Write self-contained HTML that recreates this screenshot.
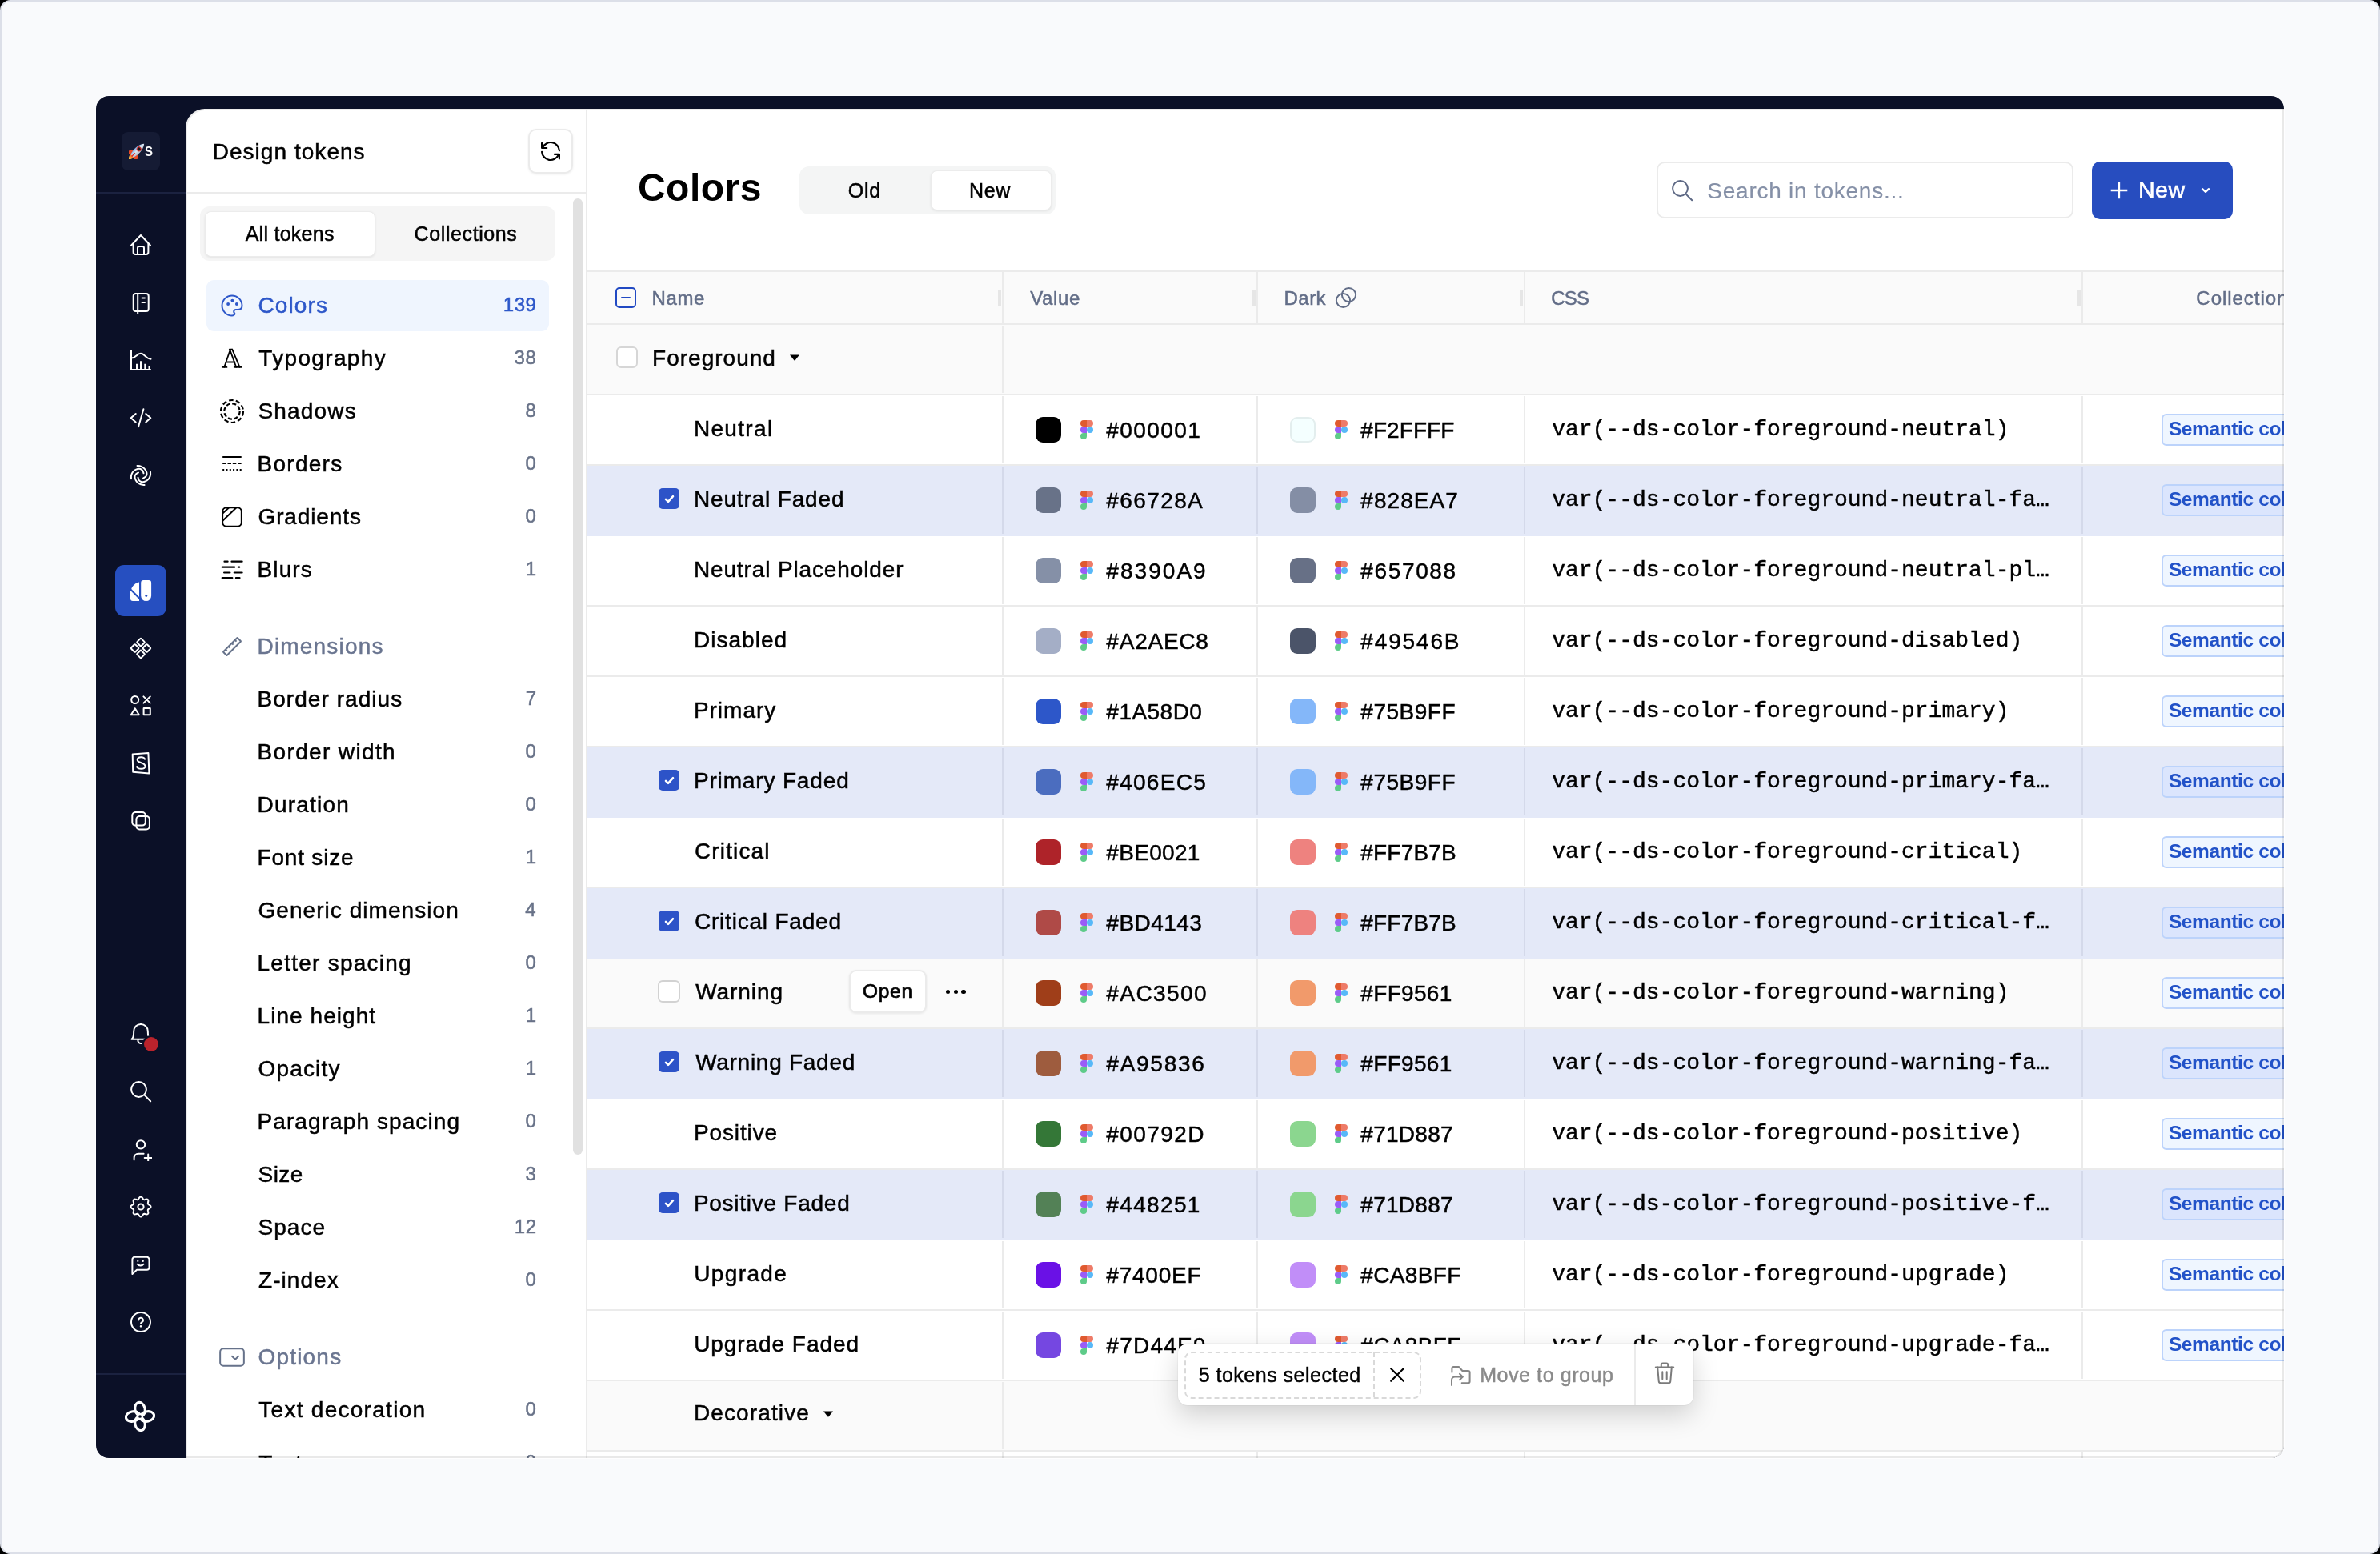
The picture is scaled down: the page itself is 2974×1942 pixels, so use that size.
<!DOCTYPE html>
<html><head><meta charset="utf-8"><title>Design tokens</title>
<style>
*{box-sizing:border-box;margin:0;padding:0}
html,body{width:2974px;height:1942px;overflow:hidden;background:#000}
body{font-family:"Liberation Sans",sans-serif;position:relative}
.b{position:absolute;display:block}
.t{position:absolute;white-space:nowrap}
#frame{position:absolute;left:0;top:0;width:2974px;height:1942px;background:#f9fafc;border:2px solid #dcdfe8;border-radius:13px;overflow:hidden}
#win{position:absolute;left:120px;top:120px;width:2734px;height:1702px;background:#0b1027;border-radius:16px;overflow:hidden;box-shadow:0 0 0 1px rgba(255,255,255,.8)}
#panel{position:absolute;left:112px;top:16px;width:2622px;height:1686px;background:#fff;border:solid #ececec;border-width:2px 0 0 2px;border-radius:24px 0 16px 0}
</style></head><body>
<div id="frame"></div>
<div id="win"><div id="panel"></div></div>

<div class="b" style="left:120px;top:120px;width:2734px;height:1702px;overflow:hidden;border-radius:16px;will-change:transform"><div class="b" style="left:-120px;top:-120px;width:2974px;height:1942px">
<div class="b" style="left:152px;top:165px;width:48px;height:48px;background:#151b34;border-radius:8px;"></div>
<svg class="b" style="left:160.5px;top:179px" width="20" height="20" viewBox="0 0 20 20"><defs><linearGradient id="rk" x1="0" x2="1" y1="0" y2="0"><stop offset="0" stop-color="#7fb0e6"/><stop offset=".45" stop-color="#dfe8f2"/><stop offset="1" stop-color="#aebccc"/></linearGradient><linearGradient id="fl" x1="0" x2="0" y1="0" y2="1"><stop offset="0" stop-color="#f4622a"/><stop offset="1" stop-color="#fbe44d"/></linearGradient></defs><g transform="translate(10.3,9.7) rotate(45)"><path d="M-2.400,8C-3.600,10.500 -1.500,13 0,15.500C1.500,13 3.600,10.500 2.400,8Z" fill="url(#fl)"/><path d="M-3.300,0.500L-7.400,6.500L-6.600,12L-3,7.500Z" fill="#ea4a26"/><path d="M3.300,0.500L7.400,6.500L6.600,12L3,7.500Z" fill="#ea4a26"/><path d="M0,-12.500C-3.300,-8.500 -4.300,-3 -3.900,3L-2.800,8.500H2.800L3.900,3C4.300,-3 3.300,-8.500 0,-12.500Z" fill="url(#rk)"/><circle cx="0" cy="-3.400" r="2.500" fill="#15171c" stroke="#d8322e" stroke-width="1"/><path d="M0,3.500v6" stroke="#d8322e" stroke-width="1.300"/></g></svg>
<div class="t " style="left:181.00px;top:177.9px;height:23px;line-height:23px;font-size:17px;color:#fff;font-weight:700;transform:scaleX(.88);transform-origin:0 50%;">S</div>
<div class="b" style="left:120px;top:240px;width:112px;height:2px;background:#1b2240;"></div>
<svg class="b" style="left:162.00px;top:291.70px;color:#fff;" width="28" height="28" viewBox="-14.0 -14.0 28 28" fill="none" stroke="#fff" stroke-width="2" stroke-linecap="round" stroke-linejoin="round"><path d="M-12,0.7L0,-12L12,0.7"/><path d="M-9.4,-1.3V9.2a2.8,2.8 0 0 0 2.8,2.8H6.600a2.800,2.800 0 0 0 2.800,-2.800V-1.300"/><path d="M-4,12V4a2,2 0 0 1 2,-2h4a2,2 0 0 1 2,2V12"/></svg>
<svg class="b" style="left:162.00px;top:364.70px;color:#fff;" width="28" height="28" viewBox="-14.0 -14.0 28 28" fill="none" stroke="#fff" stroke-width="2" stroke-linecap="round" stroke-linejoin="round"><rect x="-9.300" y="-12" width="19" height="22" rx="3"/><path d="M-3.800,-12V13"/><path d="M1.500,-6.400h3.500M1.500,-1h3.500"/></svg>
<svg class="b" style="left:162.00px;top:435.90px;color:#fff;" width="28" height="28" viewBox="-14.0 -14.0 28 28" fill="none" stroke="#fff" stroke-width="2" stroke-linecap="round" stroke-linejoin="round"><path d="M-12,-12V12H12" stroke-linejoin="miter"/><path d="M-12,-2.500C-6,-2.500 -5,-8.200 0,-8.200S6,-1.300 12.500,-1.300"/><path d="M-5,12V4.800M0,12V1.200M5.300,12V4.800M10.500,12V7.600" stroke-linecap="butt"/></svg>
<svg class="b" style="left:162.00px;top:507.80px;color:#fff;" width="28" height="28" viewBox="-14.0 -14.0 28 28" fill="none" stroke="#fff" stroke-width="2" stroke-linecap="round" stroke-linejoin="round"><path d="M-6.300,-5L-12.300,0.300L-6.300,5.600M6.300,-5L12.300,0.300L6.300,5.600M3.400,-10.800L-3,11.200"/></svg>
<svg class="b" style="left:162.00px;top:579.90px;color:#fff;" width="28" height="28" viewBox="-14.0 -14.0 28 28" fill="none" stroke="#fff" stroke-width="2" stroke-linecap="round" stroke-linejoin="round"><path d="M-4.50,-12.00C-3.75,-11.88 -1.35,-11.75 0.00,-11.30C1.35,-10.85 2.55,-10.18 3.60,-9.30C4.65,-8.42 5.65,-7.17 6.30,-6.00C6.95,-4.83 7.45,-3.47 7.50,-2.30C7.55,-1.13 7.35,0.03 6.60,1.00C5.85,1.97 3.60,3.08 3.00,3.50"/><path d="M4.50,12.00C3.75,11.88 1.35,11.75 0.00,11.30C-1.35,10.85 -2.55,10.18 -3.60,9.30C-4.65,8.42 -5.65,7.17 -6.30,6.00C-6.95,4.83 -7.45,3.47 -7.50,2.30C-7.55,1.13 -7.35,-0.03 -6.60,-1.00C-5.85,-1.97 -3.60,-3.08 -3.00,-3.50"/><path d="M-12.00,4.20C-12.00,3.58 -12.25,1.78 -12.00,0.50C-11.75,-0.78 -11.25,-2.33 -10.50,-3.50C-9.75,-4.67 -8.58,-5.75 -7.50,-6.50C-6.42,-7.25 -5.17,-7.75 -4.00,-8.00C-2.83,-8.25 -1.55,-8.33 -0.50,-8.00C0.55,-7.67 1.63,-6.88 2.30,-6.00C2.97,-5.12 3.30,-3.25 3.50,-2.70"/><path d="M12.00,-4.20C12.00,-3.58 12.25,-1.78 12.00,-0.50C11.75,0.78 11.25,2.33 10.50,3.50C9.75,4.67 8.58,5.75 7.50,6.50C6.42,7.25 5.17,7.75 4.00,8.00C2.83,8.25 1.55,8.33 0.50,8.00C-0.55,7.67 -1.63,6.88 -2.30,6.00C-2.97,5.12 -3.30,3.25 -3.50,2.70"/></svg>
<div class="b" style="left:144px;top:706px;width:64px;height:64px;background:#264fc0;border-radius:11px;"></div>
<svg class="b" style="left:162.00px;top:724.00px;color:#fff;" width="28" height="28" viewBox="-14.0 -14.0 28 28" fill="none" stroke="#fff" stroke-width="2" stroke-linecap="round" stroke-linejoin="round"><path d="M0.200,-9.800a3.200,3.200 0 0 1 3.200,-3.200h6.500a3.200,3.200 0 0 1 3.200,3.200V6.600a6.450,6.450 0 0 1 -12.900,0Z" fill="#fff" stroke="none"/><circle cx="6.800" cy="6.600" r="1.450" fill="#264fc0" stroke="none"/><path d="M-2,-10.600C-6,-10 -9.500,-7 -11.200,-3.600L-13,0.800V10a3,3 0 0 0 3,3H-2Z" fill="#fff" stroke="none"/><path d="M-13.500,-2.300L-0.500,11" stroke="#264fc0" stroke-width="2.100" stroke-linecap="butt"/></svg>
<svg class="b" style="left:162.00px;top:796.00px;color:#fff;" width="28" height="28" viewBox="-14.0 -14.0 28 28" fill="none" stroke="#fff" stroke-width="2" stroke-linecap="round" stroke-linejoin="round"><rect x="-3.65" y="-11.05" width="7.3" height="7.3" rx="1" transform="rotate(45 0 -7.4)"/><rect x="-3.65" y="3.7500000000000004" width="7.3" height="7.3" rx="1" transform="rotate(45 0 7.4)"/><rect x="-11.05" y="-3.65" width="7.3" height="7.3" rx="1" transform="rotate(45 -7.4 0)"/><rect x="3.7500000000000004" y="-3.65" width="7.3" height="7.3" rx="1" transform="rotate(45 7.4 0)"/></svg>
<svg class="b" style="left:162.00px;top:868.00px;color:#fff;" width="28" height="28" viewBox="-14.0 -14.0 28 28" fill="none" stroke="#fff" stroke-width="2" stroke-linecap="round" stroke-linejoin="round"><circle cx="-7.300" cy="-7.500" r="4.500"/><path d="M3.400,-11.600L11.800,-3.400M11.800,-11.600L3.400,-3.400"/><path d="M-7.200,3.200L-12.200,11.300H-2.200Z"/><rect x="3.600" y="3.100" width="8.200" height="8.200" rx=".3"/></svg>
<svg class="b" style="left:162.00px;top:939.70px;color:#fff;" width="28" height="28" viewBox="-14.0 -14.0 28 28" fill="none" stroke="#fff" stroke-width="2" stroke-linecap="round" stroke-linejoin="round"><path d="M-10.300,-11.500L9.400,-13L10.400,12.400L-9.800,10.700Z"/><path d="M5,-5.300C5,-8.500 -4.300,-9 -4.300,-4.500C-4.300,0 5.500,-1.500 5.500,3.500C5.500,8 -4.800,7.700 -4.800,4"/></svg>
<svg class="b" style="left:162.00px;top:1011.80px;color:#fff;" width="28" height="28" viewBox="-14.0 -14.0 28 28" fill="none" stroke="#fff" stroke-width="2" stroke-linecap="round" stroke-linejoin="round"><rect x="-10.700" y="-10.900" width="16.500" height="16.500" rx="4"/><rect x="-5.600" y="-6" width="16.500" height="16.500" rx="4"/></svg>
<svg class="b" style="left:162.00px;top:1278.00px;color:#fff;" width="28" height="28" viewBox="-14.0 -14.0 28 28" fill="none" stroke="#fff" stroke-width="2" stroke-linecap="round" stroke-linejoin="round"><path d="M-11.500,6.700C-9,5.500 -8.800,2 -8.800,-3.200a8.800,8.800 0 0 1 17.600,0c0,5.200 .2,8.700 2.700,9.900H-11.500"/><path d="M0,-13v1"/><path d="M-3.300,7a3.600,3.600 0 0 0 3.600,5"/></svg>
<svg class="b" style="left:162.00px;top:1350.00px;color:#fff;" width="28" height="28" viewBox="-14.0 -14.0 28 28" fill="none" stroke="#fff" stroke-width="2" stroke-linecap="round" stroke-linejoin="round"><circle cx="-2.500" cy="-2.500" r="9.400"/><path d="M4.400,4.400L12.200,12.200"/></svg>
<svg class="b" style="left:162.00px;top:1422.60px;color:#fff;" width="28" height="28" viewBox="-14.0 -14.0 28 28" fill="none" stroke="#fff" stroke-width="2" stroke-linecap="round" stroke-linejoin="round"><circle cx="0" cy="-6.600" r="5.200"/><path d="M-8.400,12.500V10a5.300,5.300 0 0 1 5.300,-5.300H3.600"/><path d="M9.200,5.500v9M4.700,10h9"/></svg>
<svg class="b" style="left:162.00px;top:1494.10px;color:#fff;" width="28" height="28" viewBox="-14.0 -14.0 28 28" fill="none" stroke="#fff" stroke-width="2" stroke-linecap="round" stroke-linejoin="round"><path d="M0.00,-12.55L0.81,-12.33L1.54,-11.72L2.17,-10.89L2.69,-10.02L3.16,-9.32L3.69,-8.92L4.35,-8.83L5.19,-8.99L6.17,-9.23L7.20,-9.38L8.15,-9.29L8.87,-8.87L9.29,-8.15L9.38,-7.20L9.23,-6.17L8.99,-5.19L8.83,-4.35L8.92,-3.69L9.32,-3.16L10.02,-2.69L10.89,-2.17L11.72,-1.54L12.33,-0.81L12.55,-0.00L12.33,0.81L11.72,1.54L10.89,2.17L10.02,2.69L9.32,3.16L8.92,3.69L8.83,4.35L8.99,5.19L9.23,6.17L9.38,7.20L9.29,8.15L8.87,8.87L8.15,9.29L7.20,9.38L6.17,9.23L5.19,8.99L4.35,8.83L3.69,8.92L3.16,9.32L2.69,10.02L2.17,10.89L1.54,11.72L0.81,12.33L0.00,12.55L-0.81,12.33L-1.54,11.72L-2.17,10.89L-2.69,10.02L-3.16,9.32L-3.69,8.92L-4.35,8.83L-5.19,8.99L-6.17,9.23L-7.20,9.38L-8.15,9.29L-8.87,8.87L-9.29,8.15L-9.38,7.20L-9.23,6.17L-8.99,5.19L-8.83,4.35L-8.92,3.69L-9.32,3.16L-10.02,2.69L-10.89,2.17L-11.72,1.54L-12.33,0.81L-12.55,0.00L-12.33,-0.81L-11.72,-1.54L-10.89,-2.17L-10.02,-2.69L-9.32,-3.16L-8.92,-3.69L-8.83,-4.35L-8.99,-5.19L-9.23,-6.17L-9.38,-7.20L-9.29,-8.15L-8.87,-8.87L-8.15,-9.29L-7.20,-9.38L-6.17,-9.23L-5.19,-8.99L-4.35,-8.83L-3.69,-8.92L-3.16,-9.32L-2.69,-10.02L-2.17,-10.89L-1.54,-11.72L-0.81,-12.33L-0.00,-12.55Z"/><circle cx="0" cy="0" r="3.600"/></svg>
<svg class="b" style="left:162.00px;top:1567.00px;color:#fff;" width="28" height="28" viewBox="-14.0 -14.0 28 28" fill="none" stroke="#fff" stroke-width="2" stroke-linecap="round" stroke-linejoin="round"><path d="M-10.600,11V-7.200a3,3 0 0 1 3,-3H7.500a3,3 0 0 1 3,3V2.700a3,3 0 0 1 -3,3H-5Z"/><path d="M-3.700,-5.600v.6M2.800,-5.600v.6"/><path d="M-4.300,-1.300a5,5 0 0 0 7.800,0"/></svg>
<svg class="b" style="left:162.00px;top:1638.00px;color:#fff;" width="28" height="28" viewBox="-14.0 -14.0 28 28" fill="none" stroke="#fff" stroke-width="2" stroke-linecap="round" stroke-linejoin="round"><circle cx="0" cy="0" r="12"/><path d="M-2.700,-2.400a2.800,2.800 0 1 1 4,2.500c-.9,.5 -1.300,1 -1.300,2"/><path d="M0,5.300v.1" stroke-width="2.4"/></svg>
<div class="b" style="left:178px;top:1293.7px;width:22px;height:22px;background:#0b1026;border-radius:11px;"></div>
<div class="b" style="left:180px;top:1295.7px;width:18px;height:18px;background:#b9232c;border-radius:9px;"></div>
<div class="b" style="left:120px;top:1716px;width:112px;height:2px;background:#1b2240;"></div>
<svg class="b" style="left:155.10px;top:1750.00px;color:#fff;" width="40" height="40" viewBox="-20.0 -20.0 40 40" fill="none" stroke="#fff" stroke-width="3.1" stroke-linecap="round" stroke-linejoin="round"><ellipse cx="0" cy="-9" rx="6.200" ry="8.700" transform="rotate(0) rotate(-12 0 -9)"/><ellipse cx="0" cy="-9" rx="6.200" ry="8.700" transform="rotate(90) rotate(-12 0 -9)"/><ellipse cx="0" cy="-9" rx="6.200" ry="8.700" transform="rotate(180) rotate(-12 0 -9)"/><ellipse cx="0" cy="-9" rx="6.200" ry="8.700" transform="rotate(270) rotate(-12 0 -9)"/><circle cx="0" cy="0" r="3" fill="#0b1027" stroke-width="2.300"/></svg>
<div class="t " style="left:265.70px;top:169.5px;height:39px;line-height:39px;font-size:28px;color:#000;letter-spacing:1.04px;-webkit-text-stroke:0.5px #000;">Design tokens</div>
<div class="b" style="left:660px;top:161px;width:56px;height:56px;background:#fff;border-radius:10px;border:2px solid #ebebeb;box-shadow:0 1px 3px rgba(0,0,0,.07);"></div>
<svg class="b" style="left:674.00px;top:175.00px;color:#000;" width="28" height="28" viewBox="-14.0 -14.0 28 28" fill="none" stroke="#000" stroke-width="2.2" stroke-linecap="round" stroke-linejoin="round"><path d="M-10.900,-10.100V-4H-4.800"/><path d="M-9.800,-4.800A10.900,10.900 0 0 1 10.900,-0.700"/><path d="M10.900,9.500V3.800H4.900"/><path d="M9.800,4.800A10.900,10.900 0 0 1 -10.900,0.900"/></svg>
<div class="b" style="left:232px;top:240px;width:500px;height:2px;background:#ebebeb;"></div>
<div class="b" style="left:732px;top:136px;width:2px;height:1700px;background:#ebebeb;"></div>
<div class="b" style="left:716px;top:248px;width:12px;height:1195px;background:#e1e1e1;border-radius:6px;"></div>
<div class="b" style="left:250px;top:258px;width:444px;height:68px;background:#f5f5f5;border-radius:12px;"></div>
<div class="b" style="left:255.5px;top:263.5px;width:213px;height:57px;background:#fff;border-radius:8px;border:1px solid #ececec;box-shadow:0 1px 3px rgba(0,0,0,.08);"></div>
<div class="t " style="left:306.65px;top:274.5px;height:35px;line-height:35px;font-size:25px;color:#000;letter-spacing:0.27px;-webkit-text-stroke:0.5px #000;">All tokens</div>
<div class="t " style="left:517.60px;top:274.5px;height:35px;line-height:35px;font-size:25px;color:#000;letter-spacing:0.6px;-webkit-text-stroke:0.5px #000;">Collections</div>
<div class="b" style="left:258px;top:350px;width:428px;height:64px;background:#eff5fe;border-radius:9px;"></div>
<svg class="b" style="left:276.00px;top:368.00px;color:#2d57c9;" width="28" height="28" viewBox="-14.0 -14.0 28 28" fill="none" stroke="#2d57c9" stroke-width="2" stroke-linecap="round" stroke-linejoin="round"><path d="M0,12.500A12.500,12.500 0 1 1 12.500,0c0,3.600 -2.600,5 -5.200,5h-2.600a2.500,2.500 0 0 0 -1.800,4.200c1,1.200 .2,3.300 -2.900,3.300z"/><circle cx="-4.900" cy="-2" r="1.950" fill="currentColor" stroke="none"/><circle cx=".4" cy="-6.400" r="1.950" fill="currentColor" stroke="none"/><circle cx="5.900" cy="-2" r="1.950" fill="currentColor" stroke="none"/></svg>
<div class="t " style="left:322.50px;top:361.6px;height:39px;line-height:39px;font-size:28px;color:#2d57c9;letter-spacing:1.11px;-webkit-text-stroke:0.5px #2d57c9;">Colors</div>
<div class="t " style="right:2303.46px;top:363.8px;height:33px;line-height:33px;font-size:24px;color:#2d57c9;letter-spacing:0.6px;-webkit-text-stroke:0.5px #2d57c9;">139</div>
<svg class="b" style="left:276.00px;top:434.00px;color:#000;" width="28" height="28" viewBox="-14.0 -14.0 28 28" fill="none" stroke="#000" stroke-width="2" stroke-linecap="round" stroke-linejoin="round"><path d="M-2.200,-11L-9.700,10.700" stroke-width="1.800"/><path d="M0.200,-11.300L9.500,10.700M-2.600,-10.600L5.200,10.700" stroke-width="1.800"/><path d="M-3.300,-11.400h3.600" stroke-width="1.600"/><path d="M-7.300,4.500H3.400" stroke-width="1.800"/><path d="M-12.200,10.900h5.600M2.800,10.900h9.200" stroke-width="1.900"/></svg>
<div class="t " style="left:323.25px;top:427.6px;height:39px;line-height:39px;font-size:28px;color:#000;letter-spacing:1.34px;-webkit-text-stroke:0.5px #000;">Typography</div>
<div class="t " style="right:2303.55px;top:429.8px;height:33px;line-height:33px;font-size:24px;color:#687288;letter-spacing:0.6px;-webkit-text-stroke:0.5px #687288;">38</div>
<svg class="b" style="left:274.00px;top:497.80px;color:#000;" width="32" height="32" viewBox="-16.0 -16.0 32 32" fill="none" stroke="#000" stroke-width="2" stroke-linecap="round" stroke-linejoin="round"><circle cx="0" cy="0" r="14" stroke-dasharray="5.600 3.200" stroke-linecap="butt" stroke-width="2.200"/><circle cx="0" cy="0" r="9.700" stroke-dasharray="5.200 2.400" stroke-linecap="butt" stroke-width="2.200"/></svg>
<div class="t " style="left:322.50px;top:493.6px;height:39px;line-height:39px;font-size:28px;color:#000;letter-spacing:1.17px;-webkit-text-stroke:0.5px #000;">Shadows</div>
<div class="t " style="right:2303.65px;top:495.79999999999995px;height:33px;line-height:33px;font-size:24px;color:#687288;letter-spacing:0.6px;-webkit-text-stroke:0.5px #687288;">8</div>
<svg class="b" style="left:276.00px;top:565.30px;color:#000;" width="28" height="28" viewBox="-14.0 -14.0 28 28" fill="none" stroke="#000" stroke-width="2" stroke-linecap="round" stroke-linejoin="round"><path d="M-11.800,-8H11.700" stroke-linecap="butt"/><path d="M-11.800,0.100H11.700" stroke-dasharray="4.500 1.800" stroke-linecap="butt"/><path d="M-11.800,8H11.700" stroke-dasharray="2 2.300" stroke-linecap="butt"/></svg>
<div class="t " style="left:321.50px;top:559.6px;height:39px;line-height:39px;font-size:28px;color:#000;letter-spacing:1.27px;-webkit-text-stroke:0.5px #000;">Borders</div>
<div class="t " style="right:2303.65px;top:561.8px;height:33px;line-height:33px;font-size:24px;color:#687288;letter-spacing:0.6px;-webkit-text-stroke:0.5px #687288;">0</div>
<svg class="b" style="left:276.00px;top:631.90px;color:#000;" width="28" height="28" viewBox="-14.0 -14.0 28 28" fill="none" stroke="#000" stroke-width="2" stroke-linecap="round" stroke-linejoin="round"><rect x="-11.850" y="-11.850" width="23.700" height="23.700" rx="5"/><path d="M-11.500,4.500L5.400,-11.700M-11.500,-4.700L-3.800,-11.700"/></svg>
<div class="t " style="left:322.50px;top:625.6px;height:39px;line-height:39px;font-size:28px;color:#000;letter-spacing:0.88px;-webkit-text-stroke:0.5px #000;">Gradients</div>
<div class="t " style="right:2303.65px;top:627.8px;height:33px;line-height:33px;font-size:24px;color:#687288;letter-spacing:0.6px;-webkit-text-stroke:0.5px #687288;">0</div>
<svg class="b" style="left:276.00px;top:698.40px;color:#000;" width="28" height="28" viewBox="-14.0 -14.0 28 28" fill="none" stroke="#000" stroke-width="2" stroke-linecap="round" stroke-linejoin="round"><path d="M-9.500,-10.300H-5.400M-0.500,-10.300H12.600M-12.300,-3.300H3.100M7.800,-3.300H9.200M-9.900,3.500H-2.600M2.800,3.500H12.600M-12.300,10.200H0.300M4.900,10.200H9.500" stroke-width="2.200"/></svg>
<div class="t " style="left:321.50px;top:691.6px;height:39px;line-height:39px;font-size:28px;color:#000;letter-spacing:1.12px;-webkit-text-stroke:0.5px #000;">Blurs</div>
<div class="t " style="right:2303.40px;top:693.8px;height:33px;line-height:33px;font-size:24px;color:#687288;letter-spacing:0.6px;-webkit-text-stroke:0.5px #687288;">1</div>
<svg class="b" style="left:274.00px;top:791.90px;color:#66728a;" width="32" height="32" viewBox="-16.0 -16.0 32 32" fill="none" stroke="#66728a" stroke-width="2" stroke-linecap="round" stroke-linejoin="round"><g transform="rotate(-45)"><rect x="-12.500" y="-3.200" width="25" height="6.400" rx=".5"/><path d="M-8.400,-3.200v2.600M-2.800,-3.200v2.600M2.800,-3.200v2.600M8.400,-3.200v2.600" stroke-linecap="butt"/></g></svg>
<div class="t " style="left:321.50px;top:788.1px;height:39px;line-height:39px;font-size:28px;color:#6a7590;letter-spacing:1.18px;-webkit-text-stroke:0.5px #6a7590;">Dimensions</div>
<div class="t " style="left:321.50px;top:854.1px;height:39px;line-height:39px;font-size:28px;color:#000;letter-spacing:1.05px;-webkit-text-stroke:0.5px #000;">Border radius</div>
<div class="t " style="right:2303.40px;top:856.3px;height:33px;line-height:33px;font-size:24px;color:#687288;letter-spacing:0.6px;-webkit-text-stroke:0.5px #687288;">7</div>
<div class="t " style="left:321.50px;top:920.1px;height:39px;line-height:39px;font-size:28px;color:#000;letter-spacing:1.36px;-webkit-text-stroke:0.5px #000;">Border width</div>
<div class="t " style="right:2303.65px;top:922.3px;height:33px;line-height:33px;font-size:24px;color:#687288;letter-spacing:0.6px;-webkit-text-stroke:0.5px #687288;">0</div>
<div class="t " style="left:321.50px;top:986.1px;height:39px;line-height:39px;font-size:28px;color:#000;letter-spacing:1.21px;-webkit-text-stroke:0.5px #000;">Duration</div>
<div class="t " style="right:2303.65px;top:988.3px;height:33px;line-height:33px;font-size:24px;color:#687288;letter-spacing:0.6px;-webkit-text-stroke:0.5px #687288;">0</div>
<div class="t " style="left:321.50px;top:1052.1px;height:39px;line-height:39px;font-size:28px;color:#000;letter-spacing:0.81px;-webkit-text-stroke:0.5px #000;">Font size</div>
<div class="t " style="right:2303.40px;top:1054.3px;height:33px;line-height:33px;font-size:24px;color:#687288;letter-spacing:0.6px;-webkit-text-stroke:0.5px #687288;">1</div>
<div class="t " style="left:322.50px;top:1118.1px;height:39px;line-height:39px;font-size:28px;color:#000;letter-spacing:1.05px;-webkit-text-stroke:0.5px #000;">Generic dimension</div>
<div class="t " style="right:2303.90px;top:1120.3px;height:33px;line-height:33px;font-size:24px;color:#687288;letter-spacing:0.6px;-webkit-text-stroke:0.5px #687288;">4</div>
<div class="t " style="left:321.50px;top:1184.1px;height:39px;line-height:39px;font-size:28px;color:#000;letter-spacing:1.25px;-webkit-text-stroke:0.5px #000;">Letter spacing</div>
<div class="t " style="right:2303.65px;top:1186.3px;height:33px;line-height:33px;font-size:24px;color:#687288;letter-spacing:0.6px;-webkit-text-stroke:0.5px #687288;">0</div>
<div class="t " style="left:321.50px;top:1250.1px;height:39px;line-height:39px;font-size:28px;color:#000;letter-spacing:1.06px;-webkit-text-stroke:0.5px #000;">Line height</div>
<div class="t " style="right:2303.40px;top:1252.3px;height:33px;line-height:33px;font-size:24px;color:#687288;letter-spacing:0.6px;-webkit-text-stroke:0.5px #687288;">1</div>
<div class="t " style="left:322.50px;top:1316.1px;height:39px;line-height:39px;font-size:28px;color:#000;letter-spacing:1.17px;-webkit-text-stroke:0.5px #000;">Opacity</div>
<div class="t " style="right:2303.40px;top:1318.3px;height:33px;line-height:33px;font-size:24px;color:#687288;letter-spacing:0.6px;-webkit-text-stroke:0.5px #687288;">1</div>
<div class="t " style="left:321.50px;top:1382.1px;height:39px;line-height:39px;font-size:28px;color:#000;letter-spacing:1.09px;-webkit-text-stroke:0.5px #000;">Paragraph spacing</div>
<div class="t " style="right:2303.65px;top:1384.3px;height:33px;line-height:33px;font-size:24px;color:#687288;letter-spacing:0.6px;-webkit-text-stroke:0.5px #687288;">0</div>
<div class="t " style="left:322.50px;top:1448.1px;height:39px;line-height:39px;font-size:28px;color:#000;letter-spacing:0.45px;-webkit-text-stroke:0.5px #000;">Size</div>
<div class="t " style="right:2303.65px;top:1450.3px;height:33px;line-height:33px;font-size:24px;color:#687288;letter-spacing:0.6px;-webkit-text-stroke:0.5px #687288;">3</div>
<div class="t " style="left:322.50px;top:1514.1px;height:39px;line-height:39px;font-size:28px;color:#000;letter-spacing:1.05px;-webkit-text-stroke:0.5px #000;">Space</div>
<div class="t " style="right:2303.30px;top:1516.3px;height:33px;line-height:33px;font-size:24px;color:#687288;letter-spacing:0.6px;-webkit-text-stroke:0.5px #687288;">12</div>
<div class="t " style="left:323.00px;top:1580.1px;height:39px;line-height:39px;font-size:28px;color:#000;letter-spacing:1.05px;-webkit-text-stroke:0.5px #000;">Z-index</div>
<div class="t " style="right:2303.65px;top:1582.3px;height:33px;line-height:33px;font-size:24px;color:#687288;letter-spacing:0.6px;-webkit-text-stroke:0.5px #687288;">0</div>
<svg class="b" style="left:273.00px;top:1678.90px;color:#66728a;" width="34" height="34" viewBox="-17.0 -17.0 34 34" fill="none" stroke="#66728a" stroke-width="2" stroke-linecap="round" stroke-linejoin="round"><rect x="-14.850" y="-10.700" width="29.700" height="21.400" rx="4"/><path d="M0,-1.300L4,2.700L8,-1.300"/></svg>
<div class="t " style="left:322.50px;top:1676.1px;height:39px;line-height:39px;font-size:28px;color:#6a7590;letter-spacing:1.19px;-webkit-text-stroke:0.5px #6a7590;">Options</div>
<div class="t " style="left:323.25px;top:1742.1px;height:39px;line-height:39px;font-size:28px;color:#000;letter-spacing:1.28px;-webkit-text-stroke:0.5px #000;">Text decoration</div>
<div class="t " style="right:2303.53px;top:1744.3px;height:33px;line-height:33px;font-size:24px;color:#687288;letter-spacing:0.72px;-webkit-text-stroke:0.5px #687288;">0</div>
<div class="t " style="left:323.25px;top:1809.0px;height:39px;line-height:39px;font-size:28px;color:#000;letter-spacing:0.84px;-webkit-text-stroke:0.5px #000;">Text case</div>
<div class="t " style="right:2303.53px;top:1810.3px;height:33px;line-height:33px;font-size:24px;color:#687288;letter-spacing:0.72px;-webkit-text-stroke:0.5px #687288;">0</div>
<div class="t " style="left:796.95px;top:199.5px;height:70px;line-height:70px;font-size:48px;color:#000;font-weight:700;letter-spacing:0.51px;">Colors</div>
<div class="b" style="left:999px;top:208px;width:320px;height:60px;background:#f4f5f5;border-radius:12px;"></div>
<div class="b" style="left:1162.5px;top:213px;width:151px;height:49.5px;background:#fff;border-radius:8px;border:1px solid #ececec;box-shadow:0 1px 3px rgba(0,0,0,.08);"></div>
<div class="t " style="left:1059.85px;top:221.1px;height:35px;line-height:35px;font-size:25px;color:#000;letter-spacing:0.75px;-webkit-text-stroke:0.5px #000;">Old</div>
<div class="t " style="left:1210.95px;top:221.1px;height:35px;line-height:35px;font-size:25px;color:#000;letter-spacing:0.72px;-webkit-text-stroke:0.5px #000;">New</div>
<div class="b" style="left:2070px;top:202.3px;width:521px;height:71.2px;background:#fff;border-radius:10px;border:2px solid #ebebeb;"></div>
<svg class="b" style="left:2088.00px;top:224.00px;color:#5d6884;" width="28" height="28" viewBox="-14.0 -14.0 28 28" fill="none" stroke="#5d6884" stroke-width="2" stroke-linecap="round" stroke-linejoin="round"><circle cx="-2.500" cy="-2.500" r="9.400"/><path d="M4.400,4.400L12.200,12.200"/></svg>
<div class="t " style="left:2133.36px;top:218.5px;height:39px;line-height:39px;font-size:28px;color:#8590a7;letter-spacing:0.75px;-webkit-text-stroke:0.15px #8590a7;">Search in tokens...</div>
<div class="b" style="left:2614px;top:202px;width:176px;height:72px;background:#274dbf;border-radius:10px;"></div>
<svg class="b" style="left:2634.00px;top:224.00px;color:#fff;" width="28" height="28" viewBox="-14.0 -14.0 28 28" fill="none" stroke="#fff" stroke-width="2.3" stroke-linecap="round" stroke-linejoin="round"><path d="M0,-10.300V10.300M-10.300,0H10.300" stroke-linecap="butt"/></svg>
<div class="t " style="left:2671.97px;top:218.1px;height:39px;line-height:39px;font-size:28.5px;color:#fff;letter-spacing:0.53px;-webkit-text-stroke:0.6px #fff;">New</div>
<svg class="b" style="left:2748.00px;top:230.20px;color:#fff;" width="16" height="16" viewBox="-8.0 -8.0 16 16" fill="none" stroke="#fff" stroke-width="2.4" stroke-linecap="round" stroke-linejoin="round"><path d="M-4,-1.800L0,1.800L4,-1.800"/></svg>
<div class="b" style="left:734px;top:338px;width:2120px;height:68px;background:#fafafa;border-top:2px solid #ebebeb;border-bottom:2px solid #ebebeb;"></div>
<div class="b" style="left:768.8px;top:358.8px;width:26.4px;height:26.4px;border-radius:5px;border:2px solid #2149c3;"></div>
<div class="b" style="left:776px;top:370.9px;width:12.1px;height:2.2px;background:#2149c3;border-radius:1px;"></div>
<div class="t " style="left:814.40px;top:355.7px;height:33px;line-height:33px;font-size:24px;color:#626d87;letter-spacing:0.67px;-webkit-text-stroke:0.5px #626d87;">Name</div>
<div class="t " style="left:1287.15px;top:355.7px;height:33px;line-height:33px;font-size:24px;color:#626d87;letter-spacing:0.64px;-webkit-text-stroke:0.5px #626d87;">Value</div>
<div class="t " style="left:1604.50px;top:355.7px;height:33px;line-height:33px;font-size:24px;color:#626d87;letter-spacing:0.48px;-webkit-text-stroke:0.5px #626d87;">Dark</div>
<svg class="b" style="left:1667.00px;top:357.00px;color:#626d87;" width="30" height="30" viewBox="-15.0 -15.0 30 30" fill="none" stroke="#626d87" stroke-width="2" stroke-linecap="round" stroke-linejoin="round"><circle cx="-3.500" cy="3.500" r="8.600"/><circle cx="3.500" cy="-3.500" r="8.600"/></svg>
<div class="t " style="left:1938.25px;top:355.7px;height:33px;line-height:33px;font-size:24px;color:#626d87;letter-spacing:-0.78px;-webkit-text-stroke:0.5px #626d87;">CSS</div>
<div class="t " style="left:2744.35px;top:355.7px;height:33px;line-height:33px;font-size:24px;color:#626d87;letter-spacing:0.96px;-webkit-text-stroke:0.5px #626d87;">Collection</div>
<div class="b" style="left:1252px;top:340px;width:2px;height:64px;background:#ebebeb;"></div>
<div class="b" style="left:1247px;top:362px;width:4px;height:20px;background:#e6e6e6;"></div>
<div class="b" style="left:1570px;top:340px;width:2px;height:64px;background:#ebebeb;"></div>
<div class="b" style="left:1565px;top:362px;width:4px;height:20px;background:#e6e6e6;"></div>
<div class="b" style="left:1904px;top:340px;width:2px;height:64px;background:#ebebeb;"></div>
<div class="b" style="left:1899px;top:362px;width:4px;height:20px;background:#e6e6e6;"></div>
<div class="b" style="left:2601px;top:340px;width:2px;height:64px;background:#ebebeb;"></div>
<div class="b" style="left:2596px;top:362px;width:4px;height:20px;background:#e6e6e6;"></div>
<div class="b" style="left:734px;top:406px;width:2120px;height:88px;background:#fafafa;border-bottom:2px solid #ebebeb;"></div>
<div class="b" style="left:1252px;top:407px;width:2px;height:84px;background:#ebebeb;"></div>
<div class="b" style="left:770px;top:433px;width:27px;height:27px;background:#fff;border-radius:6px;border:2px solid #d6d6d6;"></div>
<div class="t " style="left:815.10px;top:427.5px;height:39px;line-height:39px;font-size:28px;color:#000;letter-spacing:1.0px;-webkit-text-stroke:0.5px #000;">Foreground</div>
<svg class="b" style="left:986px;top:443px" width="14" height="8" viewBox="0 0 14 8"><path d="M1 .5h12L7.6 7.2a.8.8 0 0 1-1.2 0z" fill="#000"/></svg>
<div class="b" style="left:734px;top:494px;width:2120px;height:88px;background:#fff;border-bottom:2px solid #ebebeb;"></div>
<div class="b" style="left:1252px;top:495px;width:2px;height:84px;background:#ebebeb;"></div>
<div class="b" style="left:1570px;top:495px;width:2px;height:84px;background:#ebebeb;"></div>
<div class="b" style="left:1904px;top:495px;width:2px;height:84px;background:#ebebeb;"></div>
<div class="b" style="left:2601px;top:495px;width:2px;height:84px;background:#ebebeb;"></div>
<div class="t " style="left:866.90px;top:515.5px;height:39px;line-height:39px;font-size:28px;color:#000;letter-spacing:1.33px;-webkit-text-stroke:0.5px #000;">Neutral</div>
<div class="b" style="left:1294px;top:521px;width:32px;height:32px;background:#000000;border-radius:9px;"></div>
<svg class="b" style="left:1350px;top:525px" width="16" height="24" viewBox="0 0 16 24"><path d="M0 4a4 4 0 0 1 4-4h4v8H4a4 4 0 0 1-4-4z" fill="#e05a30"/><path d="M8 0h4a4 4 0 0 1 0 8H8z" fill="#ee7b68"/><path d="M0 12a4 4 0 0 1 4-4h4v8H4a4 4 0 0 1-4-4z" fill="#9a5cf7"/><circle cx="12" cy="12" r="4" fill="#57b8f8"/><path d="M0 20a4 4 0 0 1 4-4h4v4a4 4 0 0 1-8 0z" fill="#5ecb89"/></svg>
<div class="t " style="left:1382.35px;top:517.5px;height:39px;line-height:39px;font-size:28px;color:#000;letter-spacing:1.41px;-webkit-text-stroke:0.5px #000;">#000001</div>
<div class="b" style="left:1612px;top:521px;width:32px;height:32px;background:#f4ffff;border-radius:9px;border:2px solid #e3eeee;"></div>
<svg class="b" style="left:1668px;top:525px" width="16" height="24" viewBox="0 0 16 24"><path d="M0 4a4 4 0 0 1 4-4h4v8H4a4 4 0 0 1-4-4z" fill="#e05a30"/><path d="M8 0h4a4 4 0 0 1 0 8H8z" fill="#ee7b68"/><path d="M0 12a4 4 0 0 1 4-4h4v8H4a4 4 0 0 1-4-4z" fill="#9a5cf7"/><circle cx="12" cy="12" r="4" fill="#57b8f8"/><path d="M0 20a4 4 0 0 1 4-4h4v4a4 4 0 0 1-8 0z" fill="#5ecb89"/></svg>
<div class="t " style="left:1700.35px;top:517.5px;height:39px;line-height:39px;font-size:28px;color:#000;letter-spacing:0.05px;-webkit-text-stroke:0.5px #000;">#F2FFFF</div>
<div class="t " style="left:1939.16px;top:517.0px;height:39px;line-height:39px;font-size:28px;color:#000;font-family:'Liberation Mono',monospace;-webkit-text-stroke:0.45px #000;">var(--ds-color-foreground-neutral)</div>
<div class="b" style="left:2701px;top:517px;width:200px;height:40px;background:#eff6ff;border-radius:6px;border:2px solid #bcd3fb;"></div>
<div class="t " style="left:2709.90px;top:519.2px;height:34px;line-height:34px;font-size:24.5px;color:#2252c8;font-weight:700;letter-spacing:-0.38px;">Semantic colors</div>
<div class="b" style="left:734px;top:582px;width:2120px;height:88px;background:#e4e9f8;border-bottom:2px solid #e4e9f8;"></div>
<div class="b" style="left:1252px;top:583px;width:2px;height:84px;background:#d4d9ea;"></div>
<div class="b" style="left:1570px;top:583px;width:2px;height:84px;background:#d4d9ea;"></div>
<div class="b" style="left:1904px;top:583px;width:2px;height:84px;background:#d4d9ea;"></div>
<div class="b" style="left:2601px;top:583px;width:2px;height:84px;background:#d4d9ea;"></div>
<div class="b" style="left:822.7px;top:609.7px;width:26.6px;height:26.6px;background:#2d53c8;border-radius:5px;"></div>
<svg class="b" style="left:822.5px;top:609.5px" width="27" height="27" viewBox="0 0 27 27" fill="none" stroke="#fff" stroke-width="2.6" stroke-linecap="round" stroke-linejoin="round"><path d="M9 13.8l3 3 6-6.6"/></svg>
<div class="t " style="left:866.90px;top:603.5px;height:39px;line-height:39px;font-size:28px;color:#000;letter-spacing:0.85px;-webkit-text-stroke:0.5px #000;">Neutral Faded</div>
<div class="b" style="left:1294px;top:609px;width:32px;height:32px;background:#687288;border-radius:9px;"></div>
<svg class="b" style="left:1350px;top:613px" width="16" height="24" viewBox="0 0 16 24"><path d="M0 4a4 4 0 0 1 4-4h4v8H4a4 4 0 0 1-4-4z" fill="#e05a30"/><path d="M8 0h4a4 4 0 0 1 0 8H8z" fill="#ee7b68"/><path d="M0 12a4 4 0 0 1 4-4h4v8H4a4 4 0 0 1-4-4z" fill="#9a5cf7"/><circle cx="12" cy="12" r="4" fill="#57b8f8"/><path d="M0 20a4 4 0 0 1 4-4h4v4a4 4 0 0 1-8 0z" fill="#5ecb89"/></svg>
<div class="t " style="left:1382.35px;top:605.5px;height:39px;line-height:39px;font-size:28px;color:#000;letter-spacing:1.39px;-webkit-text-stroke:0.5px #000;">#66728A</div>
<div class="b" style="left:1612px;top:609px;width:32px;height:32px;background:#848ea5;border-radius:9px;"></div>
<svg class="b" style="left:1668px;top:613px" width="16" height="24" viewBox="0 0 16 24"><path d="M0 4a4 4 0 0 1 4-4h4v8H4a4 4 0 0 1-4-4z" fill="#e05a30"/><path d="M8 0h4a4 4 0 0 1 0 8H8z" fill="#ee7b68"/><path d="M0 12a4 4 0 0 1 4-4h4v8H4a4 4 0 0 1-4-4z" fill="#9a5cf7"/><circle cx="12" cy="12" r="4" fill="#57b8f8"/><path d="M0 20a4 4 0 0 1 4-4h4v4a4 4 0 0 1-8 0z" fill="#5ecb89"/></svg>
<div class="t " style="left:1700.35px;top:605.5px;height:39px;line-height:39px;font-size:28px;color:#000;letter-spacing:1.03px;-webkit-text-stroke:0.5px #000;">#828EA7</div>
<div class="t " style="left:1939.16px;top:605.0px;height:39px;line-height:39px;font-size:28px;color:#000;font-family:'Liberation Mono',monospace;-webkit-text-stroke:0.45px #000;">var(--ds-color-foreground-neutral-fa…</div>
<div class="b" style="left:2701px;top:605px;width:200px;height:40px;background:#dbe5fd;border-radius:6px;border:2px solid #bcd3fb;"></div>
<div class="t " style="left:2709.90px;top:607.2px;height:34px;line-height:34px;font-size:24.5px;color:#2252c8;font-weight:700;letter-spacing:-0.38px;">Semantic colors</div>
<div class="b" style="left:734px;top:670px;width:2120px;height:88px;background:#fff;border-bottom:2px solid #ebebeb;"></div>
<div class="b" style="left:1252px;top:671px;width:2px;height:84px;background:#ebebeb;"></div>
<div class="b" style="left:1570px;top:671px;width:2px;height:84px;background:#ebebeb;"></div>
<div class="b" style="left:1904px;top:671px;width:2px;height:84px;background:#ebebeb;"></div>
<div class="b" style="left:2601px;top:671px;width:2px;height:84px;background:#ebebeb;"></div>
<div class="t " style="left:866.90px;top:691.5px;height:39px;line-height:39px;font-size:28px;color:#000;letter-spacing:0.87px;-webkit-text-stroke:0.5px #000;">Neutral Placeholder</div>
<div class="b" style="left:1294px;top:697px;width:32px;height:32px;background:#8590a7;border-radius:9px;"></div>
<svg class="b" style="left:1350px;top:701px" width="16" height="24" viewBox="0 0 16 24"><path d="M0 4a4 4 0 0 1 4-4h4v8H4a4 4 0 0 1-4-4z" fill="#e05a30"/><path d="M8 0h4a4 4 0 0 1 0 8H8z" fill="#ee7b68"/><path d="M0 12a4 4 0 0 1 4-4h4v8H4a4 4 0 0 1-4-4z" fill="#9a5cf7"/><circle cx="12" cy="12" r="4" fill="#57b8f8"/><path d="M0 20a4 4 0 0 1 4-4h4v4a4 4 0 0 1-8 0z" fill="#5ecb89"/></svg>
<div class="t " style="left:1382.35px;top:693.5px;height:39px;line-height:39px;font-size:28px;color:#000;letter-spacing:2.04px;-webkit-text-stroke:0.5px #000;">#8390A9</div>
<div class="b" style="left:1612px;top:697px;width:32px;height:32px;background:#677086;border-radius:9px;"></div>
<svg class="b" style="left:1668px;top:701px" width="16" height="24" viewBox="0 0 16 24"><path d="M0 4a4 4 0 0 1 4-4h4v8H4a4 4 0 0 1-4-4z" fill="#e05a30"/><path d="M8 0h4a4 4 0 0 1 0 8H8z" fill="#ee7b68"/><path d="M0 12a4 4 0 0 1 4-4h4v8H4a4 4 0 0 1-4-4z" fill="#9a5cf7"/><circle cx="12" cy="12" r="4" fill="#57b8f8"/><path d="M0 20a4 4 0 0 1 4-4h4v4a4 4 0 0 1-8 0z" fill="#5ecb89"/></svg>
<div class="t " style="left:1700.35px;top:693.5px;height:39px;line-height:39px;font-size:28px;color:#000;letter-spacing:1.63px;-webkit-text-stroke:0.5px #000;">#657088</div>
<div class="t " style="left:1939.16px;top:693.0px;height:39px;line-height:39px;font-size:28px;color:#000;font-family:'Liberation Mono',monospace;-webkit-text-stroke:0.45px #000;">var(--ds-color-foreground-neutral-pl…</div>
<div class="b" style="left:2701px;top:693px;width:200px;height:40px;background:#eff6ff;border-radius:6px;border:2px solid #bcd3fb;"></div>
<div class="t " style="left:2709.90px;top:695.2px;height:34px;line-height:34px;font-size:24.5px;color:#2252c8;font-weight:700;letter-spacing:-0.38px;">Semantic colors</div>
<div class="b" style="left:734px;top:758px;width:2120px;height:88px;background:#fff;border-bottom:2px solid #ebebeb;"></div>
<div class="b" style="left:1252px;top:759px;width:2px;height:84px;background:#ebebeb;"></div>
<div class="b" style="left:1570px;top:759px;width:2px;height:84px;background:#ebebeb;"></div>
<div class="b" style="left:1904px;top:759px;width:2px;height:84px;background:#ebebeb;"></div>
<div class="b" style="left:2601px;top:759px;width:2px;height:84px;background:#ebebeb;"></div>
<div class="t " style="left:866.90px;top:779.5px;height:39px;line-height:39px;font-size:28px;color:#000;letter-spacing:1.05px;-webkit-text-stroke:0.5px #000;">Disabled</div>
<div class="b" style="left:1294px;top:785px;width:32px;height:32px;background:#a4aec6;border-radius:9px;"></div>
<svg class="b" style="left:1350px;top:789px" width="16" height="24" viewBox="0 0 16 24"><path d="M0 4a4 4 0 0 1 4-4h4v8H4a4 4 0 0 1-4-4z" fill="#e05a30"/><path d="M8 0h4a4 4 0 0 1 0 8H8z" fill="#ee7b68"/><path d="M0 12a4 4 0 0 1 4-4h4v8H4a4 4 0 0 1-4-4z" fill="#9a5cf7"/><circle cx="12" cy="12" r="4" fill="#57b8f8"/><path d="M0 20a4 4 0 0 1 4-4h4v4a4 4 0 0 1-8 0z" fill="#5ecb89"/></svg>
<div class="t " style="left:1382.35px;top:781.5px;height:39px;line-height:39px;font-size:28px;color:#000;letter-spacing:0.77px;-webkit-text-stroke:0.5px #000;">#A2AEC8</div>
<div class="b" style="left:1612px;top:785px;width:32px;height:32px;background:#4b5469;border-radius:9px;"></div>
<svg class="b" style="left:1668px;top:789px" width="16" height="24" viewBox="0 0 16 24"><path d="M0 4a4 4 0 0 1 4-4h4v8H4a4 4 0 0 1-4-4z" fill="#e05a30"/><path d="M8 0h4a4 4 0 0 1 0 8H8z" fill="#ee7b68"/><path d="M0 12a4 4 0 0 1 4-4h4v8H4a4 4 0 0 1-4-4z" fill="#9a5cf7"/><circle cx="12" cy="12" r="4" fill="#57b8f8"/><path d="M0 20a4 4 0 0 1 4-4h4v4a4 4 0 0 1-8 0z" fill="#5ecb89"/></svg>
<div class="t " style="left:1700.35px;top:781.5px;height:39px;line-height:39px;font-size:28px;color:#000;letter-spacing:1.84px;-webkit-text-stroke:0.5px #000;">#49546B</div>
<div class="t " style="left:1939.16px;top:781.0px;height:39px;line-height:39px;font-size:28px;color:#000;font-family:'Liberation Mono',monospace;-webkit-text-stroke:0.45px #000;">var(--ds-color-foreground-disabled)</div>
<div class="b" style="left:2701px;top:781px;width:200px;height:40px;background:#eff6ff;border-radius:6px;border:2px solid #bcd3fb;"></div>
<div class="t " style="left:2709.90px;top:783.2px;height:34px;line-height:34px;font-size:24.5px;color:#2252c8;font-weight:700;letter-spacing:-0.38px;">Semantic colors</div>
<div class="b" style="left:734px;top:846px;width:2120px;height:88px;background:#fff;border-bottom:2px solid #ebebeb;"></div>
<div class="b" style="left:1252px;top:847px;width:2px;height:84px;background:#ebebeb;"></div>
<div class="b" style="left:1570px;top:847px;width:2px;height:84px;background:#ebebeb;"></div>
<div class="b" style="left:1904px;top:847px;width:2px;height:84px;background:#ebebeb;"></div>
<div class="b" style="left:2601px;top:847px;width:2px;height:84px;background:#ebebeb;"></div>
<div class="t " style="left:866.90px;top:867.5px;height:39px;line-height:39px;font-size:28px;color:#000;letter-spacing:0.99px;-webkit-text-stroke:0.5px #000;">Primary</div>
<div class="b" style="left:1294px;top:873px;width:32px;height:32px;background:#2d57c9;border-radius:9px;"></div>
<svg class="b" style="left:1350px;top:877px" width="16" height="24" viewBox="0 0 16 24"><path d="M0 4a4 4 0 0 1 4-4h4v8H4a4 4 0 0 1-4-4z" fill="#e05a30"/><path d="M8 0h4a4 4 0 0 1 0 8H8z" fill="#ee7b68"/><path d="M0 12a4 4 0 0 1 4-4h4v8H4a4 4 0 0 1-4-4z" fill="#9a5cf7"/><circle cx="12" cy="12" r="4" fill="#57b8f8"/><path d="M0 20a4 4 0 0 1 4-4h4v4a4 4 0 0 1-8 0z" fill="#5ecb89"/></svg>
<div class="t " style="left:1382.35px;top:869.5px;height:39px;line-height:39px;font-size:28px;color:#000;letter-spacing:0.47px;-webkit-text-stroke:0.5px #000;">#1A58D0</div>
<div class="b" style="left:1612px;top:873px;width:32px;height:32px;background:#84b7f9;border-radius:9px;"></div>
<svg class="b" style="left:1668px;top:877px" width="16" height="24" viewBox="0 0 16 24"><path d="M0 4a4 4 0 0 1 4-4h4v8H4a4 4 0 0 1-4-4z" fill="#e05a30"/><path d="M8 0h4a4 4 0 0 1 0 8H8z" fill="#ee7b68"/><path d="M0 12a4 4 0 0 1 4-4h4v8H4a4 4 0 0 1-4-4z" fill="#9a5cf7"/><circle cx="12" cy="12" r="4" fill="#57b8f8"/><path d="M0 20a4 4 0 0 1 4-4h4v4a4 4 0 0 1-8 0z" fill="#5ecb89"/></svg>
<div class="t " style="left:1700.35px;top:869.5px;height:39px;line-height:39px;font-size:28px;color:#000;letter-spacing:0.5px;-webkit-text-stroke:0.5px #000;">#75B9FF</div>
<div class="t " style="left:1939.16px;top:869.0px;height:39px;line-height:39px;font-size:28px;color:#000;font-family:'Liberation Mono',monospace;-webkit-text-stroke:0.45px #000;">var(--ds-color-foreground-primary)</div>
<div class="b" style="left:2701px;top:869px;width:200px;height:40px;background:#eff6ff;border-radius:6px;border:2px solid #bcd3fb;"></div>
<div class="t " style="left:2709.90px;top:871.2px;height:34px;line-height:34px;font-size:24.5px;color:#2252c8;font-weight:700;letter-spacing:-0.38px;">Semantic colors</div>
<div class="b" style="left:734px;top:934px;width:2120px;height:88px;background:#e4e9f8;border-bottom:2px solid #e4e9f8;"></div>
<div class="b" style="left:1252px;top:935px;width:2px;height:84px;background:#d4d9ea;"></div>
<div class="b" style="left:1570px;top:935px;width:2px;height:84px;background:#d4d9ea;"></div>
<div class="b" style="left:1904px;top:935px;width:2px;height:84px;background:#d4d9ea;"></div>
<div class="b" style="left:2601px;top:935px;width:2px;height:84px;background:#d4d9ea;"></div>
<div class="b" style="left:822.7px;top:961.7px;width:26.6px;height:26.6px;background:#2d53c8;border-radius:5px;"></div>
<svg class="b" style="left:822.5px;top:961.5px" width="27" height="27" viewBox="0 0 27 27" fill="none" stroke="#fff" stroke-width="2.6" stroke-linecap="round" stroke-linejoin="round"><path d="M9 13.8l3 3 6-6.6"/></svg>
<div class="t " style="left:866.90px;top:955.5px;height:39px;line-height:39px;font-size:28px;color:#000;letter-spacing:0.85px;-webkit-text-stroke:0.5px #000;">Primary Faded</div>
<div class="b" style="left:1294px;top:961px;width:32px;height:32px;background:#4b6dbf;border-radius:9px;"></div>
<svg class="b" style="left:1350px;top:965px" width="16" height="24" viewBox="0 0 16 24"><path d="M0 4a4 4 0 0 1 4-4h4v8H4a4 4 0 0 1-4-4z" fill="#e05a30"/><path d="M8 0h4a4 4 0 0 1 0 8H8z" fill="#ee7b68"/><path d="M0 12a4 4 0 0 1 4-4h4v8H4a4 4 0 0 1-4-4z" fill="#9a5cf7"/><circle cx="12" cy="12" r="4" fill="#57b8f8"/><path d="M0 20a4 4 0 0 1 4-4h4v4a4 4 0 0 1-8 0z" fill="#5ecb89"/></svg>
<div class="t " style="left:1382.35px;top:957.5px;height:39px;line-height:39px;font-size:28px;color:#000;letter-spacing:1.27px;-webkit-text-stroke:0.5px #000;">#406EC5</div>
<div class="b" style="left:1612px;top:961px;width:32px;height:32px;background:#84b7f9;border-radius:9px;"></div>
<svg class="b" style="left:1668px;top:965px" width="16" height="24" viewBox="0 0 16 24"><path d="M0 4a4 4 0 0 1 4-4h4v8H4a4 4 0 0 1-4-4z" fill="#e05a30"/><path d="M8 0h4a4 4 0 0 1 0 8H8z" fill="#ee7b68"/><path d="M0 12a4 4 0 0 1 4-4h4v8H4a4 4 0 0 1-4-4z" fill="#9a5cf7"/><circle cx="12" cy="12" r="4" fill="#57b8f8"/><path d="M0 20a4 4 0 0 1 4-4h4v4a4 4 0 0 1-8 0z" fill="#5ecb89"/></svg>
<div class="t " style="left:1700.35px;top:957.5px;height:39px;line-height:39px;font-size:28px;color:#000;letter-spacing:0.5px;-webkit-text-stroke:0.5px #000;">#75B9FF</div>
<div class="t " style="left:1939.16px;top:957.0px;height:39px;line-height:39px;font-size:28px;color:#000;font-family:'Liberation Mono',monospace;-webkit-text-stroke:0.45px #000;">var(--ds-color-foreground-primary-fa…</div>
<div class="b" style="left:2701px;top:957px;width:200px;height:40px;background:#dbe5fd;border-radius:6px;border:2px solid #bcd3fb;"></div>
<div class="t " style="left:2709.90px;top:959.2px;height:34px;line-height:34px;font-size:24.5px;color:#2252c8;font-weight:700;letter-spacing:-0.38px;">Semantic colors</div>
<div class="b" style="left:734px;top:1022px;width:2120px;height:88px;background:#fff;border-bottom:2px solid #ebebeb;"></div>
<div class="b" style="left:1252px;top:1023px;width:2px;height:84px;background:#ebebeb;"></div>
<div class="b" style="left:1570px;top:1023px;width:2px;height:84px;background:#ebebeb;"></div>
<div class="b" style="left:1904px;top:1023px;width:2px;height:84px;background:#ebebeb;"></div>
<div class="b" style="left:2601px;top:1023px;width:2px;height:84px;background:#ebebeb;"></div>
<div class="t " style="left:867.90px;top:1043.5px;height:39px;line-height:39px;font-size:28px;color:#000;letter-spacing:1.16px;-webkit-text-stroke:0.5px #000;">Critical</div>
<div class="b" style="left:1294px;top:1049px;width:32px;height:32px;background:#ae2329;border-radius:9px;"></div>
<svg class="b" style="left:1350px;top:1053px" width="16" height="24" viewBox="0 0 16 24"><path d="M0 4a4 4 0 0 1 4-4h4v8H4a4 4 0 0 1-4-4z" fill="#e05a30"/><path d="M8 0h4a4 4 0 0 1 0 8H8z" fill="#ee7b68"/><path d="M0 12a4 4 0 0 1 4-4h4v8H4a4 4 0 0 1-4-4z" fill="#9a5cf7"/><circle cx="12" cy="12" r="4" fill="#57b8f8"/><path d="M0 20a4 4 0 0 1 4-4h4v4a4 4 0 0 1-8 0z" fill="#5ecb89"/></svg>
<div class="t " style="left:1382.35px;top:1045.5px;height:39px;line-height:39px;font-size:28px;color:#000;letter-spacing:0.3px;-webkit-text-stroke:0.5px #000;">#BE0021</div>
<div class="b" style="left:1612px;top:1049px;width:32px;height:32px;background:#ee827f;border-radius:9px;"></div>
<svg class="b" style="left:1668px;top:1053px" width="16" height="24" viewBox="0 0 16 24"><path d="M0 4a4 4 0 0 1 4-4h4v8H4a4 4 0 0 1-4-4z" fill="#e05a30"/><path d="M8 0h4a4 4 0 0 1 0 8H8z" fill="#ee7b68"/><path d="M0 12a4 4 0 0 1 4-4h4v8H4a4 4 0 0 1-4-4z" fill="#9a5cf7"/><circle cx="12" cy="12" r="4" fill="#57b8f8"/><path d="M0 20a4 4 0 0 1 4-4h4v4a4 4 0 0 1-8 0z" fill="#5ecb89"/></svg>
<div class="t " style="left:1700.35px;top:1045.5px;height:39px;line-height:39px;font-size:28px;color:#000;letter-spacing:0.17px;-webkit-text-stroke:0.5px #000;">#FF7B7B</div>
<div class="t " style="left:1939.16px;top:1045.0px;height:39px;line-height:39px;font-size:28px;color:#000;font-family:'Liberation Mono',monospace;-webkit-text-stroke:0.45px #000;">var(--ds-color-foreground-critical)</div>
<div class="b" style="left:2701px;top:1045px;width:200px;height:40px;background:#eff6ff;border-radius:6px;border:2px solid #bcd3fb;"></div>
<div class="t " style="left:2709.90px;top:1047.2px;height:34px;line-height:34px;font-size:24.5px;color:#2252c8;font-weight:700;letter-spacing:-0.38px;">Semantic colors</div>
<div class="b" style="left:734px;top:1110px;width:2120px;height:88px;background:#e4e9f8;border-bottom:2px solid #e4e9f8;"></div>
<div class="b" style="left:1252px;top:1111px;width:2px;height:84px;background:#d4d9ea;"></div>
<div class="b" style="left:1570px;top:1111px;width:2px;height:84px;background:#d4d9ea;"></div>
<div class="b" style="left:1904px;top:1111px;width:2px;height:84px;background:#d4d9ea;"></div>
<div class="b" style="left:2601px;top:1111px;width:2px;height:84px;background:#d4d9ea;"></div>
<div class="b" style="left:822.7px;top:1137.7px;width:26.6px;height:26.6px;background:#2d53c8;border-radius:5px;"></div>
<svg class="b" style="left:822.5px;top:1137.5px" width="27" height="27" viewBox="0 0 27 27" fill="none" stroke="#fff" stroke-width="2.6" stroke-linecap="round" stroke-linejoin="round"><path d="M9 13.8l3 3 6-6.6"/></svg>
<div class="t " style="left:867.90px;top:1131.5px;height:39px;line-height:39px;font-size:28px;color:#000;letter-spacing:0.8px;-webkit-text-stroke:0.5px #000;">Critical Faded</div>
<div class="b" style="left:1294px;top:1137px;width:32px;height:32px;background:#af4a47;border-radius:9px;"></div>
<svg class="b" style="left:1350px;top:1141px" width="16" height="24" viewBox="0 0 16 24"><path d="M0 4a4 4 0 0 1 4-4h4v8H4a4 4 0 0 1-4-4z" fill="#e05a30"/><path d="M8 0h4a4 4 0 0 1 0 8H8z" fill="#ee7b68"/><path d="M0 12a4 4 0 0 1 4-4h4v8H4a4 4 0 0 1-4-4z" fill="#9a5cf7"/><circle cx="12" cy="12" r="4" fill="#57b8f8"/><path d="M0 20a4 4 0 0 1 4-4h4v4a4 4 0 0 1-8 0z" fill="#5ecb89"/></svg>
<div class="t " style="left:1382.35px;top:1133.5px;height:39px;line-height:39px;font-size:28px;color:#000;letter-spacing:0.47px;-webkit-text-stroke:0.5px #000;">#BD4143</div>
<div class="b" style="left:1612px;top:1137px;width:32px;height:32px;background:#ee827f;border-radius:9px;"></div>
<svg class="b" style="left:1668px;top:1141px" width="16" height="24" viewBox="0 0 16 24"><path d="M0 4a4 4 0 0 1 4-4h4v8H4a4 4 0 0 1-4-4z" fill="#e05a30"/><path d="M8 0h4a4 4 0 0 1 0 8H8z" fill="#ee7b68"/><path d="M0 12a4 4 0 0 1 4-4h4v8H4a4 4 0 0 1-4-4z" fill="#9a5cf7"/><circle cx="12" cy="12" r="4" fill="#57b8f8"/><path d="M0 20a4 4 0 0 1 4-4h4v4a4 4 0 0 1-8 0z" fill="#5ecb89"/></svg>
<div class="t " style="left:1700.35px;top:1133.5px;height:39px;line-height:39px;font-size:28px;color:#000;letter-spacing:0.17px;-webkit-text-stroke:0.5px #000;">#FF7B7B</div>
<div class="t " style="left:1939.16px;top:1133.0px;height:39px;line-height:39px;font-size:28px;color:#000;font-family:'Liberation Mono',monospace;-webkit-text-stroke:0.45px #000;">var(--ds-color-foreground-critical-f…</div>
<div class="b" style="left:2701px;top:1133px;width:200px;height:40px;background:#dbe5fd;border-radius:6px;border:2px solid #bcd3fb;"></div>
<div class="t " style="left:2709.90px;top:1135.2px;height:34px;line-height:34px;font-size:24.5px;color:#2252c8;font-weight:700;letter-spacing:-0.38px;">Semantic colors</div>
<div class="b" style="left:734px;top:1198px;width:2120px;height:88px;background:#fafafa;border-bottom:2px solid #ebebeb;"></div>
<div class="b" style="left:1252px;top:1199px;width:2px;height:84px;background:#ebebeb;"></div>
<div class="b" style="left:1570px;top:1199px;width:2px;height:84px;background:#ebebeb;"></div>
<div class="b" style="left:1904px;top:1199px;width:2px;height:84px;background:#ebebeb;"></div>
<div class="b" style="left:2601px;top:1199px;width:2px;height:84px;background:#ebebeb;"></div>
<div class="b" style="left:822.3px;top:1225.2px;width:27.6px;height:27.6px;background:#fff;border-radius:6px;border:2px solid #d2d2d2;"></div>
<div class="b" style="left:1060.5px;top:1212px;width:97px;height:54px;background:#fff;border-radius:9px;border:2px solid #ebebeb;box-shadow:0 1px 3px rgba(0,0,0,.08);"></div>
<div class="t " style="left:1077.99px;top:1221.5px;height:34px;line-height:34px;font-size:24.5px;color:#000;letter-spacing:0.71px;-webkit-text-stroke:0.7px #000;">Open</div>
<div class="b" style="left:1181.9px;top:1236.6px;width:5.4px;height:5.4px;background:#000;border-radius:2.7px;"></div>
<div class="b" style="left:1191.6000000000001px;top:1236.6px;width:5.4px;height:5.4px;background:#000;border-radius:2.7px;"></div>
<div class="b" style="left:1201.3000000000002px;top:1236.6px;width:5.4px;height:5.4px;background:#000;border-radius:2.7px;"></div>
<div class="t " style="left:869.15px;top:1219.5px;height:39px;line-height:39px;font-size:28px;color:#000;letter-spacing:0.94px;-webkit-text-stroke:0.5px #000;">Warning</div>
<div class="b" style="left:1294px;top:1225px;width:32px;height:32px;background:#9f3e19;border-radius:9px;"></div>
<svg class="b" style="left:1350px;top:1229px" width="16" height="24" viewBox="0 0 16 24"><path d="M0 4a4 4 0 0 1 4-4h4v8H4a4 4 0 0 1-4-4z" fill="#e05a30"/><path d="M8 0h4a4 4 0 0 1 0 8H8z" fill="#ee7b68"/><path d="M0 12a4 4 0 0 1 4-4h4v8H4a4 4 0 0 1-4-4z" fill="#9a5cf7"/><circle cx="12" cy="12" r="4" fill="#57b8f8"/><path d="M0 20a4 4 0 0 1 4-4h4v4a4 4 0 0 1-8 0z" fill="#5ecb89"/></svg>
<div class="t " style="left:1382.35px;top:1221.5px;height:39px;line-height:39px;font-size:28px;color:#000;letter-spacing:1.41px;-webkit-text-stroke:0.5px #000;">#AC3500</div>
<div class="b" style="left:1612px;top:1225px;width:32px;height:32px;background:#f19a6b;border-radius:9px;"></div>
<svg class="b" style="left:1668px;top:1229px" width="16" height="24" viewBox="0 0 16 24"><path d="M0 4a4 4 0 0 1 4-4h4v8H4a4 4 0 0 1-4-4z" fill="#e05a30"/><path d="M8 0h4a4 4 0 0 1 0 8H8z" fill="#ee7b68"/><path d="M0 12a4 4 0 0 1 4-4h4v8H4a4 4 0 0 1-4-4z" fill="#9a5cf7"/><circle cx="12" cy="12" r="4" fill="#57b8f8"/><path d="M0 20a4 4 0 0 1 4-4h4v4a4 4 0 0 1-8 0z" fill="#5ecb89"/></svg>
<div class="t " style="left:1700.35px;top:1221.5px;height:39px;line-height:39px;font-size:28px;color:#000;letter-spacing:0.31px;-webkit-text-stroke:0.5px #000;">#FF9561</div>
<div class="t " style="left:1939.16px;top:1221.0px;height:39px;line-height:39px;font-size:28px;color:#000;font-family:'Liberation Mono',monospace;-webkit-text-stroke:0.45px #000;">var(--ds-color-foreground-warning)</div>
<div class="b" style="left:2701px;top:1221px;width:200px;height:40px;background:#eff6ff;border-radius:6px;border:2px solid #bcd3fb;"></div>
<div class="t " style="left:2709.90px;top:1223.2px;height:34px;line-height:34px;font-size:24.5px;color:#2252c8;font-weight:700;letter-spacing:-0.38px;">Semantic colors</div>
<div class="b" style="left:734px;top:1286px;width:2120px;height:88px;background:#e4e9f8;border-bottom:2px solid #e4e9f8;"></div>
<div class="b" style="left:1252px;top:1287px;width:2px;height:84px;background:#d4d9ea;"></div>
<div class="b" style="left:1570px;top:1287px;width:2px;height:84px;background:#d4d9ea;"></div>
<div class="b" style="left:1904px;top:1287px;width:2px;height:84px;background:#d4d9ea;"></div>
<div class="b" style="left:2601px;top:1287px;width:2px;height:84px;background:#d4d9ea;"></div>
<div class="b" style="left:822.7px;top:1313.7px;width:26.6px;height:26.6px;background:#2d53c8;border-radius:5px;"></div>
<svg class="b" style="left:822.5px;top:1313.5px" width="27" height="27" viewBox="0 0 27 27" fill="none" stroke="#fff" stroke-width="2.6" stroke-linecap="round" stroke-linejoin="round"><path d="M9 13.8l3 3 6-6.6"/></svg>
<div class="t " style="left:869.15px;top:1307.5px;height:39px;line-height:39px;font-size:28px;color:#000;letter-spacing:0.73px;-webkit-text-stroke:0.5px #000;">Warning Faded</div>
<div class="b" style="left:1294px;top:1313px;width:32px;height:32px;background:#9e5c3e;border-radius:9px;"></div>
<svg class="b" style="left:1350px;top:1317px" width="16" height="24" viewBox="0 0 16 24"><path d="M0 4a4 4 0 0 1 4-4h4v8H4a4 4 0 0 1-4-4z" fill="#e05a30"/><path d="M8 0h4a4 4 0 0 1 0 8H8z" fill="#ee7b68"/><path d="M0 12a4 4 0 0 1 4-4h4v8H4a4 4 0 0 1-4-4z" fill="#9a5cf7"/><circle cx="12" cy="12" r="4" fill="#57b8f8"/><path d="M0 20a4 4 0 0 1 4-4h4v4a4 4 0 0 1-8 0z" fill="#5ecb89"/></svg>
<div class="t " style="left:1382.35px;top:1309.5px;height:39px;line-height:39px;font-size:28px;color:#000;letter-spacing:1.73px;-webkit-text-stroke:0.5px #000;">#A95836</div>
<div class="b" style="left:1612px;top:1313px;width:32px;height:32px;background:#f19a6b;border-radius:9px;"></div>
<svg class="b" style="left:1668px;top:1317px" width="16" height="24" viewBox="0 0 16 24"><path d="M0 4a4 4 0 0 1 4-4h4v8H4a4 4 0 0 1-4-4z" fill="#e05a30"/><path d="M8 0h4a4 4 0 0 1 0 8H8z" fill="#ee7b68"/><path d="M0 12a4 4 0 0 1 4-4h4v8H4a4 4 0 0 1-4-4z" fill="#9a5cf7"/><circle cx="12" cy="12" r="4" fill="#57b8f8"/><path d="M0 20a4 4 0 0 1 4-4h4v4a4 4 0 0 1-8 0z" fill="#5ecb89"/></svg>
<div class="t " style="left:1700.35px;top:1309.5px;height:39px;line-height:39px;font-size:28px;color:#000;letter-spacing:0.31px;-webkit-text-stroke:0.5px #000;">#FF9561</div>
<div class="t " style="left:1939.16px;top:1309.0px;height:39px;line-height:39px;font-size:28px;color:#000;font-family:'Liberation Mono',monospace;-webkit-text-stroke:0.45px #000;">var(--ds-color-foreground-warning-fa…</div>
<div class="b" style="left:2701px;top:1309px;width:200px;height:40px;background:#dbe5fd;border-radius:6px;border:2px solid #bcd3fb;"></div>
<div class="t " style="left:2709.90px;top:1311.2px;height:34px;line-height:34px;font-size:24.5px;color:#2252c8;font-weight:700;letter-spacing:-0.38px;">Semantic colors</div>
<div class="b" style="left:734px;top:1374px;width:2120px;height:88px;background:#fff;border-bottom:2px solid #ebebeb;"></div>
<div class="b" style="left:1252px;top:1375px;width:2px;height:84px;background:#ebebeb;"></div>
<div class="b" style="left:1570px;top:1375px;width:2px;height:84px;background:#ebebeb;"></div>
<div class="b" style="left:1904px;top:1375px;width:2px;height:84px;background:#ebebeb;"></div>
<div class="b" style="left:2601px;top:1375px;width:2px;height:84px;background:#ebebeb;"></div>
<div class="t " style="left:866.90px;top:1395.5px;height:39px;line-height:39px;font-size:28px;color:#000;letter-spacing:0.89px;-webkit-text-stroke:0.5px #000;">Positive</div>
<div class="b" style="left:1294px;top:1401px;width:32px;height:32px;background:#347737;border-radius:9px;"></div>
<svg class="b" style="left:1350px;top:1405px" width="16" height="24" viewBox="0 0 16 24"><path d="M0 4a4 4 0 0 1 4-4h4v8H4a4 4 0 0 1-4-4z" fill="#e05a30"/><path d="M8 0h4a4 4 0 0 1 0 8H8z" fill="#ee7b68"/><path d="M0 12a4 4 0 0 1 4-4h4v8H4a4 4 0 0 1-4-4z" fill="#9a5cf7"/><circle cx="12" cy="12" r="4" fill="#57b8f8"/><path d="M0 20a4 4 0 0 1 4-4h4v4a4 4 0 0 1-8 0z" fill="#5ecb89"/></svg>
<div class="t " style="left:1382.35px;top:1397.5px;height:39px;line-height:39px;font-size:28px;color:#000;letter-spacing:1.42px;-webkit-text-stroke:0.5px #000;">#00792D</div>
<div class="b" style="left:1612px;top:1401px;width:32px;height:32px;background:#8bd68f;border-radius:9px;"></div>
<svg class="b" style="left:1668px;top:1405px" width="16" height="24" viewBox="0 0 16 24"><path d="M0 4a4 4 0 0 1 4-4h4v8H4a4 4 0 0 1-4-4z" fill="#e05a30"/><path d="M8 0h4a4 4 0 0 1 0 8H8z" fill="#ee7b68"/><path d="M0 12a4 4 0 0 1 4-4h4v8H4a4 4 0 0 1-4-4z" fill="#9a5cf7"/><circle cx="12" cy="12" r="4" fill="#57b8f8"/><path d="M0 20a4 4 0 0 1 4-4h4v4a4 4 0 0 1-8 0z" fill="#5ecb89"/></svg>
<div class="t " style="left:1700.35px;top:1397.5px;height:39px;line-height:39px;font-size:28px;color:#000;letter-spacing:0.26px;-webkit-text-stroke:0.5px #000;">#71D887</div>
<div class="t " style="left:1939.16px;top:1397.0px;height:39px;line-height:39px;font-size:28px;color:#000;font-family:'Liberation Mono',monospace;-webkit-text-stroke:0.45px #000;">var(--ds-color-foreground-positive)</div>
<div class="b" style="left:2701px;top:1397px;width:200px;height:40px;background:#eff6ff;border-radius:6px;border:2px solid #bcd3fb;"></div>
<div class="t " style="left:2709.90px;top:1399.2px;height:34px;line-height:34px;font-size:24.5px;color:#2252c8;font-weight:700;letter-spacing:-0.38px;">Semantic colors</div>
<div class="b" style="left:734px;top:1462px;width:2120px;height:88px;background:#e4e9f8;border-bottom:2px solid #e4e9f8;"></div>
<div class="b" style="left:1252px;top:1463px;width:2px;height:84px;background:#d4d9ea;"></div>
<div class="b" style="left:1570px;top:1463px;width:2px;height:84px;background:#d4d9ea;"></div>
<div class="b" style="left:1904px;top:1463px;width:2px;height:84px;background:#d4d9ea;"></div>
<div class="b" style="left:2601px;top:1463px;width:2px;height:84px;background:#d4d9ea;"></div>
<div class="b" style="left:822.7px;top:1489.7px;width:26.6px;height:26.6px;background:#2d53c8;border-radius:5px;"></div>
<svg class="b" style="left:822.5px;top:1489.5px" width="27" height="27" viewBox="0 0 27 27" fill="none" stroke="#fff" stroke-width="2.6" stroke-linecap="round" stroke-linejoin="round"><path d="M9 13.8l3 3 6-6.6"/></svg>
<div class="t " style="left:866.90px;top:1483.5px;height:39px;line-height:39px;font-size:28px;color:#000;letter-spacing:0.74px;-webkit-text-stroke:0.5px #000;">Positive Faded</div>
<div class="b" style="left:1294px;top:1489px;width:32px;height:32px;background:#538156;border-radius:9px;"></div>
<svg class="b" style="left:1350px;top:1493px" width="16" height="24" viewBox="0 0 16 24"><path d="M0 4a4 4 0 0 1 4-4h4v8H4a4 4 0 0 1-4-4z" fill="#e05a30"/><path d="M8 0h4a4 4 0 0 1 0 8H8z" fill="#ee7b68"/><path d="M0 12a4 4 0 0 1 4-4h4v8H4a4 4 0 0 1-4-4z" fill="#9a5cf7"/><circle cx="12" cy="12" r="4" fill="#57b8f8"/><path d="M0 20a4 4 0 0 1 4-4h4v4a4 4 0 0 1-8 0z" fill="#5ecb89"/></svg>
<div class="t " style="left:1382.35px;top:1485.5px;height:39px;line-height:39px;font-size:28px;color:#000;letter-spacing:1.34px;-webkit-text-stroke:0.5px #000;">#448251</div>
<div class="b" style="left:1612px;top:1489px;width:32px;height:32px;background:#8bd68f;border-radius:9px;"></div>
<svg class="b" style="left:1668px;top:1493px" width="16" height="24" viewBox="0 0 16 24"><path d="M0 4a4 4 0 0 1 4-4h4v8H4a4 4 0 0 1-4-4z" fill="#e05a30"/><path d="M8 0h4a4 4 0 0 1 0 8H8z" fill="#ee7b68"/><path d="M0 12a4 4 0 0 1 4-4h4v8H4a4 4 0 0 1-4-4z" fill="#9a5cf7"/><circle cx="12" cy="12" r="4" fill="#57b8f8"/><path d="M0 20a4 4 0 0 1 4-4h4v4a4 4 0 0 1-8 0z" fill="#5ecb89"/></svg>
<div class="t " style="left:1700.35px;top:1485.5px;height:39px;line-height:39px;font-size:28px;color:#000;letter-spacing:0.26px;-webkit-text-stroke:0.5px #000;">#71D887</div>
<div class="t " style="left:1939.16px;top:1485.0px;height:39px;line-height:39px;font-size:28px;color:#000;font-family:'Liberation Mono',monospace;-webkit-text-stroke:0.45px #000;">var(--ds-color-foreground-positive-f…</div>
<div class="b" style="left:2701px;top:1485px;width:200px;height:40px;background:#dbe5fd;border-radius:6px;border:2px solid #bcd3fb;"></div>
<div class="t " style="left:2709.90px;top:1487.2px;height:34px;line-height:34px;font-size:24.5px;color:#2252c8;font-weight:700;letter-spacing:-0.38px;">Semantic colors</div>
<div class="b" style="left:734px;top:1550px;width:2120px;height:88px;background:#fff;border-bottom:2px solid #ebebeb;"></div>
<div class="b" style="left:1252px;top:1551px;width:2px;height:84px;background:#ebebeb;"></div>
<div class="b" style="left:1570px;top:1551px;width:2px;height:84px;background:#ebebeb;"></div>
<div class="b" style="left:1904px;top:1551px;width:2px;height:84px;background:#ebebeb;"></div>
<div class="b" style="left:2601px;top:1551px;width:2px;height:84px;background:#ebebeb;"></div>
<div class="t " style="left:867.15px;top:1571.5px;height:39px;line-height:39px;font-size:28px;color:#000;letter-spacing:1.39px;-webkit-text-stroke:0.5px #000;">Upgrade</div>
<div class="b" style="left:1294px;top:1577px;width:32px;height:32px;background:#6a11e6;border-radius:9px;"></div>
<svg class="b" style="left:1350px;top:1581px" width="16" height="24" viewBox="0 0 16 24"><path d="M0 4a4 4 0 0 1 4-4h4v8H4a4 4 0 0 1-4-4z" fill="#e05a30"/><path d="M8 0h4a4 4 0 0 1 0 8H8z" fill="#ee7b68"/><path d="M0 12a4 4 0 0 1 4-4h4v8H4a4 4 0 0 1-4-4z" fill="#9a5cf7"/><circle cx="12" cy="12" r="4" fill="#57b8f8"/><path d="M0 20a4 4 0 0 1 4-4h4v4a4 4 0 0 1-8 0z" fill="#5ecb89"/></svg>
<div class="t " style="left:1382.35px;top:1573.5px;height:39px;line-height:39px;font-size:28px;color:#000;letter-spacing:0.75px;-webkit-text-stroke:0.5px #000;">#7400EF</div>
<div class="b" style="left:1612px;top:1577px;width:32px;height:32px;background:#c18ef8;border-radius:9px;"></div>
<svg class="b" style="left:1668px;top:1581px" width="16" height="24" viewBox="0 0 16 24"><path d="M0 4a4 4 0 0 1 4-4h4v8H4a4 4 0 0 1-4-4z" fill="#e05a30"/><path d="M8 0h4a4 4 0 0 1 0 8H8z" fill="#ee7b68"/><path d="M0 12a4 4 0 0 1 4-4h4v8H4a4 4 0 0 1-4-4z" fill="#9a5cf7"/><circle cx="12" cy="12" r="4" fill="#57b8f8"/><path d="M0 20a4 4 0 0 1 4-4h4v4a4 4 0 0 1-8 0z" fill="#5ecb89"/></svg>
<div class="t " style="left:1700.35px;top:1573.5px;height:39px;line-height:39px;font-size:28px;color:#000;letter-spacing:0.34px;-webkit-text-stroke:0.5px #000;">#CA8BFF</div>
<div class="t " style="left:1939.16px;top:1573.0px;height:39px;line-height:39px;font-size:28px;color:#000;font-family:'Liberation Mono',monospace;-webkit-text-stroke:0.45px #000;">var(--ds-color-foreground-upgrade)</div>
<div class="b" style="left:2701px;top:1573px;width:200px;height:40px;background:#eff6ff;border-radius:6px;border:2px solid #bcd3fb;"></div>
<div class="t " style="left:2709.90px;top:1575.2px;height:34px;line-height:34px;font-size:24.5px;color:#2252c8;font-weight:700;letter-spacing:-0.38px;">Semantic colors</div>
<div class="b" style="left:734px;top:1638px;width:2120px;height:88px;background:#fff;border-bottom:2px solid #ebebeb;"></div>
<div class="b" style="left:1252px;top:1639px;width:2px;height:84px;background:#ebebeb;"></div>
<div class="b" style="left:1570px;top:1639px;width:2px;height:84px;background:#ebebeb;"></div>
<div class="b" style="left:1904px;top:1639px;width:2px;height:84px;background:#ebebeb;"></div>
<div class="b" style="left:2601px;top:1639px;width:2px;height:84px;background:#ebebeb;"></div>
<div class="t " style="left:867.15px;top:1659.5px;height:39px;line-height:39px;font-size:28px;color:#000;letter-spacing:0.94px;-webkit-text-stroke:0.5px #000;">Upgrade Faded</div>
<div class="b" style="left:1294px;top:1665px;width:32px;height:32px;background:#7547e1;border-radius:9px;"></div>
<svg class="b" style="left:1350px;top:1669px" width="16" height="24" viewBox="0 0 16 24"><path d="M0 4a4 4 0 0 1 4-4h4v8H4a4 4 0 0 1-4-4z" fill="#e05a30"/><path d="M8 0h4a4 4 0 0 1 0 8H8z" fill="#ee7b68"/><path d="M0 12a4 4 0 0 1 4-4h4v8H4a4 4 0 0 1-4-4z" fill="#9a5cf7"/><circle cx="12" cy="12" r="4" fill="#57b8f8"/><path d="M0 20a4 4 0 0 1 4-4h4v4a4 4 0 0 1-8 0z" fill="#5ecb89"/></svg>
<div class="t " style="left:1382.35px;top:1661.5px;height:39px;line-height:39px;font-size:28px;color:#000;letter-spacing:1.25px;-webkit-text-stroke:0.5px #000;">#7D44E9</div>
<div class="b" style="left:1612px;top:1665px;width:32px;height:32px;background:#c18ef8;border-radius:9px;"></div>
<svg class="b" style="left:1668px;top:1669px" width="16" height="24" viewBox="0 0 16 24"><path d="M0 4a4 4 0 0 1 4-4h4v8H4a4 4 0 0 1-4-4z" fill="#e05a30"/><path d="M8 0h4a4 4 0 0 1 0 8H8z" fill="#ee7b68"/><path d="M0 12a4 4 0 0 1 4-4h4v8H4a4 4 0 0 1-4-4z" fill="#9a5cf7"/><circle cx="12" cy="12" r="4" fill="#57b8f8"/><path d="M0 20a4 4 0 0 1 4-4h4v4a4 4 0 0 1-8 0z" fill="#5ecb89"/></svg>
<div class="t " style="left:1700.35px;top:1661.5px;height:39px;line-height:39px;font-size:28px;color:#000;letter-spacing:0.34px;-webkit-text-stroke:0.5px #000;">#CA8BFF</div>
<div class="t " style="left:1939.16px;top:1661.0px;height:39px;line-height:39px;font-size:28px;color:#000;font-family:'Liberation Mono',monospace;-webkit-text-stroke:0.45px #000;">var(--ds-color-foreground-upgrade-fa…</div>
<div class="b" style="left:2701px;top:1661px;width:200px;height:40px;background:#eff6ff;border-radius:6px;border:2px solid #bcd3fb;"></div>
<div class="t " style="left:2709.90px;top:1663.2px;height:34px;line-height:34px;font-size:24.5px;color:#2252c8;font-weight:700;letter-spacing:-0.38px;">Semantic colors</div>
<div class="b" style="left:734px;top:1726px;width:2120px;height:88px;background:#fafafa;border-bottom:2px solid #ebebeb;"></div>
<div class="b" style="left:1252px;top:1727px;width:2px;height:84px;background:#ebebeb;"></div>
<div class="t " style="left:866.90px;top:1746.2px;height:39px;line-height:39px;font-size:28px;color:#000;letter-spacing:1.13px;-webkit-text-stroke:0.5px #000;">Decorative</div>
<svg class="b" style="left:1028px;top:1763px" width="14" height="8" viewBox="0 0 14 8"><path d="M1 .5h12L7.6 7.2a.8.8 0 0 1-1.2 0z" fill="#000"/></svg>
<div class="b" style="left:734px;top:1814px;width:2120px;height:20px;background:#fff;"></div>
<div class="b" style="left:1252px;top:1815px;width:2px;height:84px;background:#ebebeb;"></div>
<div class="b" style="left:1570px;top:1815px;width:2px;height:84px;background:#ebebeb;"></div>
<div class="b" style="left:1904px;top:1815px;width:2px;height:84px;background:#ebebeb;"></div>
<div class="b" style="left:2601px;top:1815px;width:2px;height:84px;background:#ebebeb;"></div>
<div class="b" style="left:1472px;top:1679px;width:644px;height:77px;background:#fff;border-radius:12px;box-shadow:0 12px 32px rgba(0,0,0,.17),0 0 0 1px rgba(0,0,0,.03);"></div>
<div class="b" style="left:1480px;top:1688.5px;width:295.5px;height:59.5px;border-radius:9px;border:2px dashed #d9d9d9;"></div>
<div class="b" style="left:1716.2px;top:1690px;width:2px;height:56px;border-left:2px dashed #d9d9d9;"></div>
<div class="t " style="left:1497.65px;top:1700.5px;height:35px;line-height:35px;font-size:25px;color:#000;letter-spacing:0.5px;-webkit-text-stroke:0.5px #000;">5 tokens selected</div>
<svg class="b" style="left:1733.90px;top:1706.20px;color:#000;" width="24" height="24" viewBox="-12.0 -12.0 24 24" fill="none" stroke="#000" stroke-width="2.2" stroke-linecap="round" stroke-linejoin="round"><path d="M-7.800,-7.800L7.800,7.800M7.800,-7.800L-7.800,7.800"/></svg>
<svg class="b" style="left:1810.80px;top:1703.60px;color:#858585;" width="30" height="30" viewBox="-15.0 -15.0 30 30" fill="none" stroke="#858585" stroke-width="2" stroke-linecap="round" stroke-linejoin="round"><path d="M-11.600,-4.300V-9a2,2 0 0 1 2,-2h6.500l4.500,5h7.200a2,2 0 0 1 2,2V7.200a2,2 0 0 1 -2,2H0.700"/><path d="M-12,12V5.500a4,4 0 0 1 4,-4H1.600"/><path d="M-2,-2.300l3.700,3.800l-3.700,3.800"/></svg>
<div class="t " style="left:1849.15px;top:1700.5px;height:35px;line-height:35px;font-size:25px;color:#8a8a8a;letter-spacing:0.58px;-webkit-text-stroke:0.5px #8a8a8a;">Move to group</div>
<div class="b" style="left:2042px;top:1679px;width:2px;height:77px;background:#ebebeb;"></div>
<svg class="b" style="left:2065.00px;top:1701.00px;color:#7b7b7b;" width="30" height="30" viewBox="-15.0 -15.0 30 30" fill="none" stroke="#7b7b7b" stroke-width="2" stroke-linecap="round" stroke-linejoin="round"><path d="M-11.200,-7.500H11.200"/><path d="M-4.200,-7.500V-10.500a2,2 0 0 1 2,-2h4.400a2,2 0 0 1 2,2V-7.500"/><path d="M-8.800,-7.500L-7.300,10a2.500,2.500 0 0 0 2.500,2.300h9.600a2.500,2.500 0 0 0 2.500,-2.300L8.800,-7.500"/><path d="M-2.700,-1.700V7.300M2.700,-1.700V7.300"/></svg>
</div></div>
<div class="b" style="left:232px;top:136px;width:2622px;height:1686px;border-right:2px solid rgba(0,0,0,.085);border-bottom:2px solid rgba(0,0,0,.085);border-bottom-right-radius:16px;pointer-events:none"></div>
</body></html>
